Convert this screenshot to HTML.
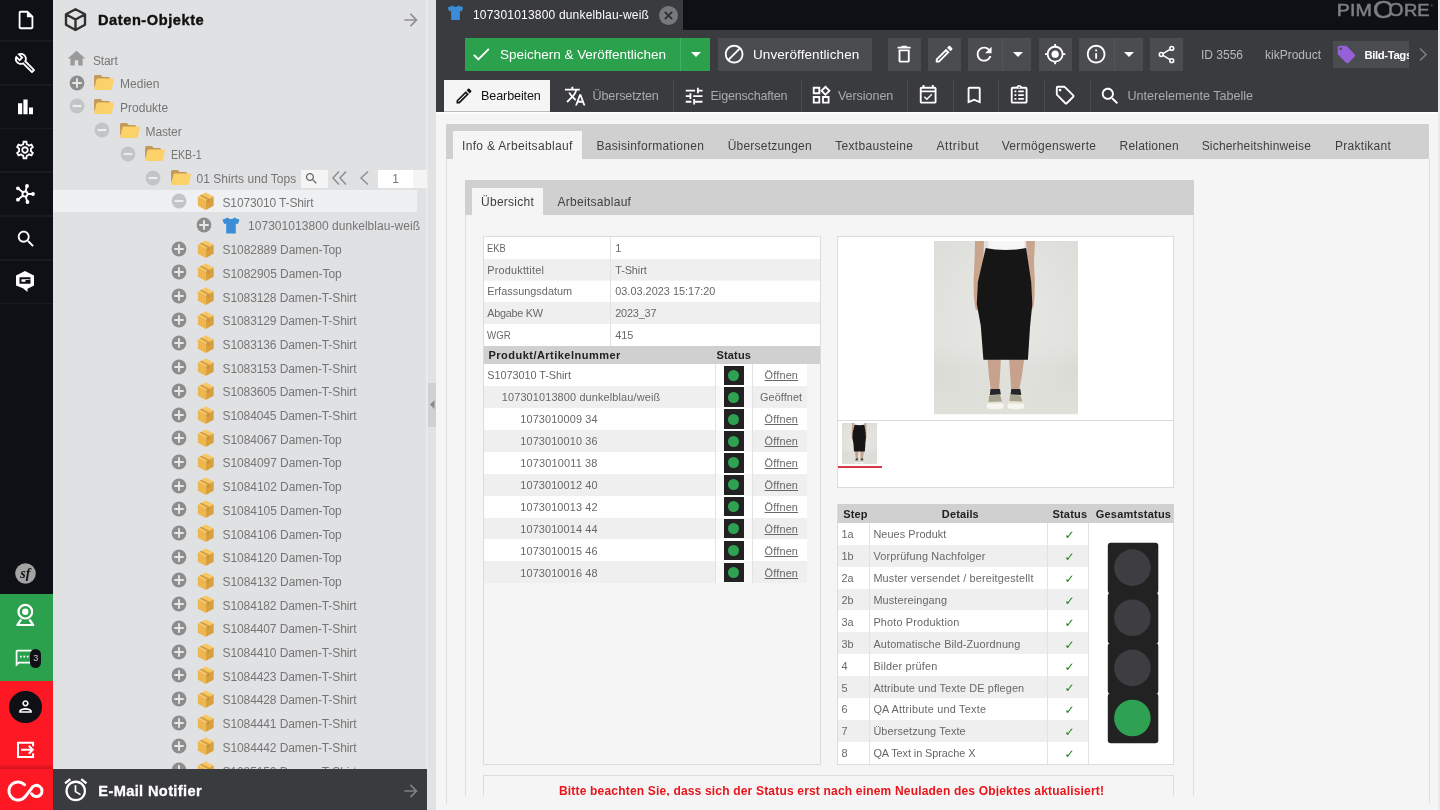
<!DOCTYPE html>
<html lang="de"><head><meta charset="utf-8"><title>Pimcore</title>
<style>
html,body{margin:0;padding:0;}
body{width:1440px;height:810px;overflow:hidden;position:relative;background:#f5f5f5;font-family:"Liberation Sans",sans-serif;}
#root{position:absolute;left:0;top:0;width:1440px;height:810px;overflow:hidden;will-change:transform;}
#root div,#root svg.ic,#root svg.ab{position:absolute;box-sizing:border-box;}
.t{white-space:nowrap;}
u{text-decoration:underline;}
</style></head><body><div id="root">

<div style="left:0.00px;top:0.00px;width:53.00px;height:594.00px;background:#0f1015;"></div>
<div style="left:0.00px;top:40.10px;width:53.00px;height:1.80px;background:#191a1f;"></div>
<div style="left:0.00px;top:83.90px;width:53.00px;height:1.80px;background:#191a1f;"></div>
<div style="left:0.00px;top:127.70px;width:53.00px;height:1.80px;background:#191a1f;"></div>
<div style="left:0.00px;top:171.40px;width:53.00px;height:1.80px;background:#191a1f;"></div>
<div style="left:0.00px;top:215.20px;width:53.00px;height:1.80px;background:#191a1f;"></div>
<div style="left:0.00px;top:259.00px;width:53.00px;height:1.80px;background:#191a1f;"></div>
<div style="left:0.00px;top:302.70px;width:53.00px;height:1.80px;background:#191a1f;"></div>
<svg class="ic" style="left:14.50px;top:8.50px;width:22.00px;height:22.00px" viewBox="0 0 24 24"><path fill="#fff" d="M14 2H6c-1.1 0-1.99.9-1.99 2L4 20c0 1.1.89 2 1.99 2H18c1.1 0 2-.9 2-2V8l-6-6zM6 20V4h7v5h5v11H6z"/></svg>
<svg class="ic" style="left:14.40px;top:52.30px;width:22.00px;height:22.00px" viewBox="0 0 24 24"><path fill="#fff" d="M22.61 18.99l-9.08-9.08c.93-2.34.45-5.1-1.44-7C9.79.61 6.21.4 3.66 2.26L7.5 6.11 6.08 7.52 2.25 3.69C.39 6.23.6 9.82 2.9 12.11c1.86 1.86 4.57 2.35 6.89 1.48l9.11 9.11c.39.39 1.02.39 1.41 0l2.3-2.3c.4-.38.4-1.01 0-1.41zm-3 1.6l-9.46-9.46c-.61.45-1.29.72-2 .82-1.36.2-2.79-.21-3.83-1.25C3.37 9.76 2.93 8.5 3 7.26l3.09 3.09 4.24-4.24-3.09-3.09c1.24-.07 2.49.37 3.44 1.31 1.08 1.08 1.49 2.57 1.24 3.96-.12.71-.42 1.37-.88 1.96l9.45 9.45-.88.89z"/></svg>
<svg class="ic" style="left:14px;top:96px;width:24px;height:24px" viewBox="0 0 24 24"><path fill="#fff" d="M4 7.3h4.2v11H4zM9.400 3.500h4.200v14.800H9.400zM15 11.500h4v6.800h-4z"/></svg>
<svg class="ic" style="left:14.10px;top:139.10px;width:22.00px;height:22.00px" viewBox="0 0 24 24"><path fill="#fff" d="M19.43 12.98c.04-.32.07-.64.07-.98 0-.34-.03-.66-.07-.98l2.11-1.65c.19-.15.24-.42.12-.64l-2-3.46c-.09-.16-.26-.25-.44-.25-.06 0-.12.01-.17.03l-2.49 1c-.52-.4-1.08-.73-1.69-.98l-.38-2.65C14.46 2.18 14.25 2 14 2h-4c-.25 0-.46.18-.49.42l-.38 2.65c-.61.25-1.17.59-1.69.98l-2.49-1c-.06-.02-.12-.03-.18-.03-.17 0-.34.09-.43.25l-2 3.46c-.13.22-.07.49.12.64l2.11 1.65c-.04.32-.07.65-.07.98 0 .33.03.66.07.98l-2.11 1.65c-.19.15-.24.42-.12.64l2 3.46c.09.16.26.25.44.25.06 0 .12-.01.17-.03l2.49-1c.52.4 1.08.73 1.69.98l.38 2.65c.03.24.24.42.49.42h4c.25 0 .46-.18.49-.42l.38-2.65c.61-.25 1.17-.59 1.69-.98l2.49 1c.06.02.12.03.18.03.17 0 .34-.09.43-.25l2-3.46c.12-.22.07-.49-.12-.64l-2.11-1.65zm-1.98-1.71c.04.31.05.52.05.73 0 .21-.02.43-.05.73l-.14 1.13.89.7 1.08.84-.7 1.21-1.27-.51-1.04-.42-.9.68c-.43.32-.84.56-1.25.73l-1.06.43-.16 1.13-.2 1.35h-1.4l-.19-1.35-.16-1.13-1.06-.43c-.43-.18-.83-.41-1.23-.71l-.91-.7-1.06.43-1.27.51-.7-1.21 1.08-.84.89-.7-.14-1.13c-.03-.31-.05-.54-.05-.74s.02-.43.05-.73l.14-1.13-.89-.7-1.08-.84.7-1.21 1.27.51 1.04.42.9-.68c.43-.32.84-.56 1.25-.73l1.06-.43.16-1.13.2-1.35h1.39l.19 1.35.16 1.13 1.06.43c.43.18.83.41 1.23.71l.91.7 1.06-.43 1.27-.51.7 1.21-1.07.85-.89.7.14 1.13zM12 8c-2.21 0-4 1.79-4 4s1.79 4 4 4 4-1.79 4-4-1.79-4-4-4zm0 6c-1.1 0-2-.9-2-2s.9-2 2-2 2 .9 2 2-.9 2-2 2z"/></svg>
<svg class="ic" style="left:14.100px;top:183.300px;width:22px;height:22px" viewBox="0 0 24 24"><g stroke="#fff" stroke-width="2" fill="none"><path d="M12 12L4.500 6M12 12L14 3.500M12 12L20.500 12M12 12L4.500 18M12 12L14.500 20.500"/></g><circle cx="12" cy="12" r="3.800" fill="#fff"/><circle cx="12" cy="12" r="1.700" fill="#0f1015"/><g fill="#fff"><circle cx="4.300" cy="5.800" r="2.100"/><circle cx="14.200" cy="3.300" r="2.100"/><circle cx="20.700" cy="12" r="2.100"/><circle cx="4.300" cy="18.200" r="2.100"/><circle cx="14.700" cy="20.700" r="2.100"/></g></svg>
<svg class="ic" style="left:14.60px;top:227.60px;width:22.00px;height:22.00px" viewBox="0 0 24 24"><path fill="#fff" d="M15.5 14h-.79l-.28-.27C15.41 12.59 16 11.11 16 9.5 16 5.91 13.09 3 9.5 3S3 5.91 3 9.5 5.91 16 9.5 16c1.61 0 3.09-.59 4.23-1.57l.27.28v.79l5 4.99L20.49 19l-4.99-5zm-6 0C7.01 14 5 11.99 5 9.5S7.01 5 9.5 5 14 7.01 14 9.5 11.99 14 9.5 14z"/></svg>
<svg class="ic" style="left:14.400px;top:270px;width:22px;height:23px" viewBox="0 0 22 23"><path fill="#fff" d="M11 1L20 5.500V15.500L13.500 18.700V22L9 18.200 2 15.500V5.500z"/><path fill="none" stroke="#0f1015" stroke-width="2" d="M15.500 9.500V8.200H6.500v4.600h9V11h-4"/></svg>
<svg class="ic" style="left:14.500px;top:563px;width:21px;height:21px" viewBox="0 0 21 21"><circle cx="10.500" cy="10.500" r="10.300" fill="#a3a3a3"/><text x="10.300" y="15" text-anchor="middle" font-family="Liberation Serif,serif" font-style="italic" font-weight="700" font-size="14" fill="#0f1015">sf</text></svg>
<div style="left:0.00px;top:594.00px;width:53.00px;height:87.40px;background:#2ba14d;"></div>
<svg class="ic" style="left:14px;top:601px;width:24px;height:27px" viewBox="0 0 24 27"><circle cx="11.300" cy="10.700" r="6.800" fill="none" stroke="#fff" stroke-width="2.200"/><circle cx="11.300" cy="10.700" r="3.200" fill="#fff"/><path d="M7.200 18.500L3.400 24h15.800l-3.800-5.500" fill="none" stroke="#fff" stroke-width="2.200" stroke-linejoin="round"/></svg>
<svg class="ic" style="left:13.95px;top:648.35px;width:20.50px;height:20.50px" viewBox="0 0 24 24"><path fill="#fff" d="M20 2H4c-1.100 0-2 .9-2 2v18l4-4h14c1.100 0 2-.9 2-2V4c0-1.100-.9-2-2-2zm0 14H5.170L4 17.170V4h16v12zM7 9h2v2H7zm4 0h2v2h-2zm4 0h2v2h-2z"/></svg>
<div style="left:30.300px;top:649.200px;width:11px;height:18.400px;border-radius:5.500px;background:#0f1015;"></div>
<div class="t" style="left:30.30px;top:648.40px;height:20.00px;line-height:20.00px;font-size:9.00px;color:#ccc;width:11.00px;text-align:center;">3</div>
<div style="left:0.00px;top:681.40px;width:53.00px;height:128.60px;background:#fd1824;"></div>
<div style="left:0.00px;top:763.50px;width:53.00px;height:5.00px;background:linear-gradient(to bottom,rgba(90,0,10,0),rgba(90,0,10,0.280));"></div>
<div style="left:9px;top:690.700px;width:32.600px;height:32.600px;border-radius:50%;background:#0f1015;"></div>
<svg class="ic" style="left:15.80px;top:697.00px;width:19.00px;height:19.00px" viewBox="0 0 24 24"><path fill="#fff" d="M12 6c1.100 0 2 .9 2 2s-.9 2-2 2-2-.9-2-2 .9-2 2-2m0 10c2.700 0 5.800 1.290 6 2H6c.23-.72 3.310-2 6-2m0-12C9.790 4 8 5.790 8 8s1.790 4 4 4 4-1.790 4-4-1.790-4-4-4zm0 10c-2.670 0-8 1.340-8 4v2h16v-2c0-2.660-5.330-4-8-4z"/></svg>
<svg class="ic" style="left:15px;top:739px;width:22px;height:22px" viewBox="0 0 22 22"><g fill="none" stroke="#fff" stroke-width="2"><path d="M18.100 7.300V3.700H3v14.200h15.100v-3.600"/><path d="M6 10.800h11.500M13.800 6.800l4 4-4 4"/></g></svg>
<svg class="ic" style="left:6px;top:779px;width:40px;height:24px" viewBox="0 0 40 24"><path fill="none" stroke="#fff" stroke-width="3" stroke-linecap="round" d="M18.600 5.700A9.100 9.100 0 1 0 16.500 19.900C20 18 22 13.500 25.200 9.900A5.600 5.600 0 1 1 25.600 14.900"/></svg>
<div style="left:53.00px;top:0.00px;width:374.00px;height:769.00px;background:#e0e1e3;"></div>
<div style="left:427.00px;top:0.00px;width:9.00px;height:810.00px;background:#e1e2e4;"></div>
<div style="left:426.00px;top:0.00px;width:2.10px;height:769.00px;background:#e9eaec;"></div>
<div style="left:427.50px;top:383.00px;width:8.50px;height:44.00px;background:#cfd0d1;"></div>
<svg class="ic" style="left:428px;top:399px;width:7px;height:12px" viewBox="0 0 7 12"><path d="M6.500 1.200v8.700L1.900 5.600z" fill="#8a8a8a"/></svg>
<svg class="ic" style="left:63px;top:6px;width:25px;height:27px" viewBox="0 0 25 27"><path d="M12.500 3.300L22 8.300v10.500l-9.500 5.200L3 18.800V8.300zM3.300 8.500l9.200 5 9.200-5M12.500 13.500V23.700" fill="none" stroke="#303030" stroke-width="2.400" stroke-linejoin="round"/></svg>
<div class="t" style="left:98.00px;top:10.00px;height:20.00px;line-height:20.00px;font-size:14.60px;color:#111;font-weight:700;letter-spacing:0.565px;-webkit-text-stroke:0.4px #111;">Daten-Objekte</div>
<svg class="ic" style="left:401.00px;top:9.50px;width:20.00px;height:20.00px" viewBox="0 0 24 24"><path fill="#909090" d="M12 4l-1.41 1.41L16.17 11H4v2h12.17l-5.58 5.59L12 20l8-8z"/></svg>
<div style="left:53.00px;top:190.40px;width:363.50px;height:21.80px;background:#eff0f2;"></div>
<svg class="ic" style="left:66.00px;top:48.40px;width:21.00px;height:21.00px" viewBox="0 0 24 24"><path fill="#9a9a9a" d="M10 20v-6h4v6h5v-8h3L12 3 2 12h3v8z"/></svg>
<div class="t" style="left:93.00px;top:50.50px;height:20.00px;line-height:20.00px;font-size:12.00px;color:#757575;letter-spacing:-0.143px;">Start</div>
<svg class="ic" style="left:68.50px;top:74.70px;width:16px;height:16px" viewBox="0 0 16 16"><circle cx="8" cy="8" r="7.400" fill="#8d8d8d"/><path d="M3.300 7.050h3.750V3.300h1.900v3.750h3.750v1.900H8.950v3.750h-1.900V8.950H3.300z" fill="#e6e7e8"/></svg>
<svg class="ic" style="left:93.30px;top:74.10px;width:21.300px;height:17px" viewBox="0 0 20 17" preserveAspectRatio="none"><path d="M1 2.600C1 1.700 1.600 1 2.500 1h4.300c.5 0 .9.200 1.200.6l1 1.400h5.500c.8 0 1.500.7 1.500 1.500V13H1z" fill="#c49a5a"/><path d="M3.300 5.600c.2-.7.800-1.100 1.500-1.100h13.400c.9 0 1.500.8 1.300 1.700l-1.700 8.600c-.1.700-.7 1.200-1.500 1.200H2.600c-1 0-1.700-.9-1.400-1.800z" fill="#fbd26a"/></svg>
<div class="t" style="left:120.00px;top:74.20px;height:20.00px;line-height:20.00px;font-size:12.00px;color:#757575;letter-spacing:0.026px;">Medien</div>
<svg class="ic" style="left:68.50px;top:98.40px;width:16px;height:16px" viewBox="0 0 16 16"><circle cx="8" cy="8" r="7.400" fill="#c3c4c5"/><path d="M3.600 6.950h8.800v2.100H3.600z" fill="#eceded"/></svg>
<svg class="ic" style="left:93.30px;top:97.80px;width:21.300px;height:17px" viewBox="0 0 20 17" preserveAspectRatio="none"><path d="M1 2.600C1 1.700 1.600 1 2.500 1h4.300c.5 0 .9.200 1.200.6l1 1.400h5.500c.8 0 1.500.7 1.500 1.500V13H1z" fill="#c49a5a"/><path d="M3.300 5.600c.2-.7.800-1.100 1.500-1.100h13.400c.9 0 1.500.8 1.300 1.700l-1.700 8.600c-.1.700-.7 1.200-1.500 1.200H2.600c-1 0-1.700-.9-1.400-1.800z" fill="#fbd26a"/></svg>
<div class="t" style="left:120.00px;top:97.90px;height:20.00px;line-height:20.00px;font-size:12.00px;color:#757575;letter-spacing:0.009px;">Produkte</div>
<svg class="ic" style="left:94.00px;top:122.10px;width:16px;height:16px" viewBox="0 0 16 16"><circle cx="8" cy="8" r="7.400" fill="#c3c4c5"/><path d="M3.600 6.950h8.800v2.100H3.600z" fill="#eceded"/></svg>
<svg class="ic" style="left:118.80px;top:121.50px;width:21.300px;height:17px" viewBox="0 0 20 17" preserveAspectRatio="none"><path d="M1 2.600C1 1.700 1.600 1 2.500 1h4.300c.5 0 .9.200 1.200.6l1 1.400h5.500c.8 0 1.500.7 1.500 1.500V13H1z" fill="#c49a5a"/><path d="M3.300 5.600c.2-.7.800-1.100 1.500-1.100h13.400c.9 0 1.500.8 1.300 1.700l-1.700 8.600c-.1.700-.7 1.200-1.500 1.200H2.600c-1 0-1.700-.9-1.400-1.800z" fill="#fbd26a"/></svg>
<div class="t" style="left:145.50px;top:121.60px;height:20.00px;line-height:20.00px;font-size:12.00px;color:#757575;letter-spacing:-0.107px;">Master</div>
<svg class="ic" style="left:119.50px;top:145.80px;width:16px;height:16px" viewBox="0 0 16 16"><circle cx="8" cy="8" r="7.400" fill="#c3c4c5"/><path d="M3.600 6.950h8.800v2.100H3.600z" fill="#eceded"/></svg>
<svg class="ic" style="left:144.30px;top:145.20px;width:21.300px;height:17px" viewBox="0 0 20 17" preserveAspectRatio="none"><path d="M1 2.600C1 1.700 1.600 1 2.500 1h4.300c.5 0 .9.200 1.200.6l1 1.400h5.500c.8 0 1.500.7 1.500 1.500V13H1z" fill="#c49a5a"/><path d="M3.300 5.600c.2-.7.800-1.100 1.500-1.100h13.400c.9 0 1.500.8 1.300 1.700l-1.700 8.600c-.1.700-.7 1.200-1.500 1.200H2.600c-1 0-1.700-.9-1.400-1.800z" fill="#fbd26a"/></svg>
<div class="t" style="left:171.00px;top:145.30px;height:20.00px;line-height:20.00px;font-size:12.00px;color:#757575;transform:scaleX(0.882);transform-origin:0 50%;">EKB-1</div>
<svg class="ic" style="left:145.00px;top:169.50px;width:16px;height:16px" viewBox="0 0 16 16"><circle cx="8" cy="8" r="7.400" fill="#c3c4c5"/><path d="M3.600 6.950h8.800v2.100H3.600z" fill="#eceded"/></svg>
<svg class="ic" style="left:169.80px;top:168.90px;width:21.300px;height:17px" viewBox="0 0 20 17" preserveAspectRatio="none"><path d="M1 2.600C1 1.700 1.600 1 2.500 1h4.300c.5 0 .9.200 1.200.6l1 1.400h5.500c.8 0 1.500.7 1.500 1.500V13H1z" fill="#c49a5a"/><path d="M3.300 5.600c.2-.7.800-1.100 1.500-1.100h13.400c.9 0 1.500.8 1.300 1.700l-1.700 8.600c-.1.700-.7 1.200-1.500 1.200H2.600c-1 0-1.700-.9-1.400-1.800z" fill="#fbd26a"/></svg>
<div class="t" style="left:196.50px;top:169.00px;height:20.00px;line-height:20.00px;font-size:12.00px;color:#757575;letter-spacing:0.029px;">01 Shirts und Tops</div>
<svg class="ic" style="left:170.50px;top:193.20px;width:16px;height:16px" viewBox="0 0 16 16"><circle cx="8" cy="8" r="7.400" fill="#c3c4c5"/><path d="M3.600 6.950h8.800v2.100H3.600z" fill="#eceded"/></svg>
<svg class="ic" style="left:197.30px;top:192.30px;width:17.500px;height:18.500px" viewBox="0 0 17 18"><path d="M8.500 0.600L16.200 4.300 8.500 8.300 0.800 4.300z" fill="#f6c765"/><path d="M0.800 4.300L8.500 8.300V17.400L0.800 13.300z" fill="#eeb64f"/><path d="M16.200 4.300L8.500 8.300V17.400L16.200 13.300z" fill="#d9a03f"/><path d="M4.300 2.600L12 6.500v3.200l-2 1V7.500L2.700 3.400z" fill="#c48c35" opacity=".75"/></svg>
<div class="t" style="left:222.50px;top:192.70px;height:20.00px;line-height:20.00px;font-size:12.00px;color:#757575;letter-spacing:-0.141px;">S1073010 T-Shirt</div>
<svg class="ic" style="left:196.00px;top:216.90px;width:16px;height:16px" viewBox="0 0 16 16"><circle cx="8" cy="8" r="7.400" fill="#8d8d8d"/><path d="M3.300 7.050h3.750V3.300h1.900v3.750h3.750v1.900H8.950v3.750h-1.900V8.950H3.300z" fill="#e6e7e8"/></svg>
<svg class="ic" style="left:221.80px;top:216.80px;width:18px;height:17px" viewBox="0 0 18 17"><path d="M5.800 0.500c.8 1.100 1.900 1.600 3.200 1.600s2.400-.5 3.200-1.600l5.300 2.300-1.600 4.300-2.100-.7V16.500H4.200V6.400l-2.100.7L.5 2.800z" fill="#3a8dd6"/></svg>
<div class="t" style="left:248.00px;top:216.40px;height:20.00px;line-height:20.00px;font-size:12.00px;color:#757575;letter-spacing:0.043px;">107301013800 dunkelblau-weiß</div>
<svg class="ic" style="left:170.50px;top:240.60px;width:16px;height:16px" viewBox="0 0 16 16"><circle cx="8" cy="8" r="7.400" fill="#8d8d8d"/><path d="M3.300 7.050h3.750V3.300h1.900v3.750h3.750v1.900H8.950v3.750h-1.900V8.950H3.300z" fill="#e6e7e8"/></svg>
<svg class="ic" style="left:197.30px;top:239.70px;width:17.500px;height:18.500px" viewBox="0 0 17 18"><path d="M8.500 0.600L16.200 4.300 8.500 8.300 0.800 4.300z" fill="#f6c765"/><path d="M0.800 4.300L8.500 8.300V17.400L0.800 13.300z" fill="#eeb64f"/><path d="M16.200 4.300L8.500 8.300V17.400L16.200 13.300z" fill="#d9a03f"/><path d="M4.300 2.600L12 6.500v3.200l-2 1V7.500L2.700 3.400z" fill="#c48c35" opacity=".75"/></svg>
<div class="t" style="left:222.50px;top:240.10px;height:20.00px;line-height:20.00px;font-size:12.00px;color:#757575;letter-spacing:-0.051px;">S1082889 Damen-Top</div>
<svg class="ic" style="left:170.50px;top:264.30px;width:16px;height:16px" viewBox="0 0 16 16"><circle cx="8" cy="8" r="7.400" fill="#8d8d8d"/><path d="M3.300 7.050h3.750V3.300h1.900v3.750h3.750v1.900H8.950v3.750h-1.900V8.950H3.300z" fill="#e6e7e8"/></svg>
<svg class="ic" style="left:197.30px;top:263.40px;width:17.500px;height:18.500px" viewBox="0 0 17 18"><path d="M8.500 0.600L16.200 4.300 8.500 8.300 0.800 4.300z" fill="#f6c765"/><path d="M0.800 4.300L8.500 8.300V17.400L0.800 13.300z" fill="#eeb64f"/><path d="M16.200 4.300L8.500 8.300V17.400L16.200 13.300z" fill="#d9a03f"/><path d="M4.300 2.600L12 6.500v3.200l-2 1V7.500L2.700 3.400z" fill="#c48c35" opacity=".75"/></svg>
<div class="t" style="left:222.50px;top:263.80px;height:20.00px;line-height:20.00px;font-size:12.00px;color:#757575;letter-spacing:-0.051px;">S1082905 Damen-Top</div>
<svg class="ic" style="left:170.50px;top:288.00px;width:16px;height:16px" viewBox="0 0 16 16"><circle cx="8" cy="8" r="7.400" fill="#8d8d8d"/><path d="M3.300 7.050h3.750V3.300h1.900v3.750h3.750v1.900H8.950v3.750h-1.900V8.950H3.300z" fill="#e6e7e8"/></svg>
<svg class="ic" style="left:197.30px;top:287.10px;width:17.500px;height:18.500px" viewBox="0 0 17 18"><path d="M8.500 0.600L16.200 4.300 8.500 8.300 0.800 4.300z" fill="#f6c765"/><path d="M0.800 4.300L8.500 8.300V17.400L0.800 13.300z" fill="#eeb64f"/><path d="M16.200 4.300L8.500 8.300V17.400L16.200 13.300z" fill="#d9a03f"/><path d="M4.300 2.600L12 6.500v3.200l-2 1V7.500L2.700 3.400z" fill="#c48c35" opacity=".75"/></svg>
<div class="t" style="left:222.50px;top:287.50px;height:20.00px;line-height:20.00px;font-size:12.00px;color:#757575;letter-spacing:-0.097px;">S1083128 Damen-T-Shirt</div>
<svg class="ic" style="left:170.50px;top:311.70px;width:16px;height:16px" viewBox="0 0 16 16"><circle cx="8" cy="8" r="7.400" fill="#8d8d8d"/><path d="M3.300 7.050h3.750V3.300h1.900v3.750h3.750v1.900H8.950v3.750h-1.900V8.950H3.300z" fill="#e6e7e8"/></svg>
<svg class="ic" style="left:197.30px;top:310.80px;width:17.500px;height:18.500px" viewBox="0 0 17 18"><path d="M8.500 0.600L16.200 4.300 8.500 8.300 0.800 4.300z" fill="#f6c765"/><path d="M0.800 4.300L8.500 8.300V17.400L0.800 13.300z" fill="#eeb64f"/><path d="M16.200 4.300L8.500 8.300V17.400L16.200 13.300z" fill="#d9a03f"/><path d="M4.300 2.600L12 6.500v3.200l-2 1V7.500L2.700 3.400z" fill="#c48c35" opacity=".75"/></svg>
<div class="t" style="left:222.50px;top:311.20px;height:20.00px;line-height:20.00px;font-size:12.00px;color:#757575;letter-spacing:-0.097px;">S1083129 Damen-T-Shirt</div>
<svg class="ic" style="left:170.50px;top:335.40px;width:16px;height:16px" viewBox="0 0 16 16"><circle cx="8" cy="8" r="7.400" fill="#8d8d8d"/><path d="M3.300 7.050h3.750V3.300h1.900v3.750h3.750v1.900H8.950v3.750h-1.900V8.950H3.300z" fill="#e6e7e8"/></svg>
<svg class="ic" style="left:197.30px;top:334.50px;width:17.500px;height:18.500px" viewBox="0 0 17 18"><path d="M8.500 0.600L16.200 4.300 8.500 8.300 0.800 4.300z" fill="#f6c765"/><path d="M0.800 4.300L8.500 8.300V17.400L0.800 13.300z" fill="#eeb64f"/><path d="M16.200 4.300L8.500 8.300V17.400L16.200 13.300z" fill="#d9a03f"/><path d="M4.300 2.600L12 6.500v3.200l-2 1V7.500L2.700 3.400z" fill="#c48c35" opacity=".75"/></svg>
<div class="t" style="left:222.50px;top:334.90px;height:20.00px;line-height:20.00px;font-size:12.00px;color:#757575;letter-spacing:-0.097px;">S1083136 Damen-T-Shirt</div>
<svg class="ic" style="left:170.50px;top:359.10px;width:16px;height:16px" viewBox="0 0 16 16"><circle cx="8" cy="8" r="7.400" fill="#8d8d8d"/><path d="M3.300 7.050h3.750V3.300h1.900v3.750h3.750v1.900H8.950v3.750h-1.900V8.950H3.300z" fill="#e6e7e8"/></svg>
<svg class="ic" style="left:197.30px;top:358.20px;width:17.500px;height:18.500px" viewBox="0 0 17 18"><path d="M8.500 0.600L16.200 4.300 8.500 8.300 0.800 4.300z" fill="#f6c765"/><path d="M0.800 4.300L8.500 8.300V17.400L0.800 13.300z" fill="#eeb64f"/><path d="M16.200 4.300L8.500 8.300V17.400L16.200 13.300z" fill="#d9a03f"/><path d="M4.300 2.600L12 6.500v3.200l-2 1V7.500L2.700 3.400z" fill="#c48c35" opacity=".75"/></svg>
<div class="t" style="left:222.50px;top:358.60px;height:20.00px;line-height:20.00px;font-size:12.00px;color:#757575;letter-spacing:-0.097px;">S1083153 Damen-T-Shirt</div>
<svg class="ic" style="left:170.50px;top:382.80px;width:16px;height:16px" viewBox="0 0 16 16"><circle cx="8" cy="8" r="7.400" fill="#8d8d8d"/><path d="M3.300 7.050h3.750V3.300h1.900v3.750h3.750v1.900H8.950v3.750h-1.900V8.950H3.300z" fill="#e6e7e8"/></svg>
<svg class="ic" style="left:197.30px;top:381.90px;width:17.500px;height:18.500px" viewBox="0 0 17 18"><path d="M8.500 0.600L16.200 4.300 8.500 8.300 0.800 4.300z" fill="#f6c765"/><path d="M0.800 4.300L8.500 8.300V17.400L0.800 13.300z" fill="#eeb64f"/><path d="M16.200 4.300L8.500 8.300V17.400L16.200 13.300z" fill="#d9a03f"/><path d="M4.300 2.600L12 6.500v3.200l-2 1V7.500L2.700 3.400z" fill="#c48c35" opacity=".75"/></svg>
<div class="t" style="left:222.50px;top:382.30px;height:20.00px;line-height:20.00px;font-size:12.00px;color:#757575;letter-spacing:-0.097px;">S1083605 Damen-T-Shirt</div>
<svg class="ic" style="left:170.50px;top:406.50px;width:16px;height:16px" viewBox="0 0 16 16"><circle cx="8" cy="8" r="7.400" fill="#8d8d8d"/><path d="M3.300 7.050h3.750V3.300h1.900v3.750h3.750v1.900H8.950v3.750h-1.900V8.950H3.300z" fill="#e6e7e8"/></svg>
<svg class="ic" style="left:197.30px;top:405.60px;width:17.500px;height:18.500px" viewBox="0 0 17 18"><path d="M8.500 0.600L16.200 4.300 8.500 8.300 0.800 4.300z" fill="#f6c765"/><path d="M0.800 4.300L8.500 8.300V17.400L0.800 13.300z" fill="#eeb64f"/><path d="M16.200 4.300L8.500 8.300V17.400L16.200 13.300z" fill="#d9a03f"/><path d="M4.300 2.600L12 6.500v3.200l-2 1V7.500L2.700 3.400z" fill="#c48c35" opacity=".75"/></svg>
<div class="t" style="left:222.50px;top:406.00px;height:20.00px;line-height:20.00px;font-size:12.00px;color:#757575;letter-spacing:-0.097px;">S1084045 Damen-T-Shirt</div>
<svg class="ic" style="left:170.50px;top:430.20px;width:16px;height:16px" viewBox="0 0 16 16"><circle cx="8" cy="8" r="7.400" fill="#8d8d8d"/><path d="M3.300 7.050h3.750V3.300h1.900v3.750h3.750v1.900H8.950v3.750h-1.900V8.950H3.300z" fill="#e6e7e8"/></svg>
<svg class="ic" style="left:197.30px;top:429.30px;width:17.500px;height:18.500px" viewBox="0 0 17 18"><path d="M8.500 0.600L16.200 4.300 8.500 8.300 0.800 4.300z" fill="#f6c765"/><path d="M0.800 4.300L8.500 8.300V17.400L0.800 13.300z" fill="#eeb64f"/><path d="M16.200 4.300L8.500 8.300V17.400L16.200 13.300z" fill="#d9a03f"/><path d="M4.300 2.600L12 6.500v3.200l-2 1V7.500L2.700 3.400z" fill="#c48c35" opacity=".75"/></svg>
<div class="t" style="left:222.50px;top:429.70px;height:20.00px;line-height:20.00px;font-size:12.00px;color:#757575;letter-spacing:-0.051px;">S1084067 Damen-Top</div>
<svg class="ic" style="left:170.50px;top:453.90px;width:16px;height:16px" viewBox="0 0 16 16"><circle cx="8" cy="8" r="7.400" fill="#8d8d8d"/><path d="M3.300 7.050h3.750V3.300h1.900v3.750h3.750v1.900H8.950v3.750h-1.900V8.950H3.300z" fill="#e6e7e8"/></svg>
<svg class="ic" style="left:197.30px;top:453.00px;width:17.500px;height:18.500px" viewBox="0 0 17 18"><path d="M8.500 0.600L16.200 4.300 8.500 8.300 0.800 4.300z" fill="#f6c765"/><path d="M0.800 4.300L8.500 8.300V17.400L0.800 13.300z" fill="#eeb64f"/><path d="M16.200 4.300L8.500 8.300V17.400L16.200 13.300z" fill="#d9a03f"/><path d="M4.300 2.600L12 6.500v3.200l-2 1V7.500L2.700 3.400z" fill="#c48c35" opacity=".75"/></svg>
<div class="t" style="left:222.50px;top:453.40px;height:20.00px;line-height:20.00px;font-size:12.00px;color:#757575;letter-spacing:-0.051px;">S1084097 Damen-Top</div>
<svg class="ic" style="left:170.50px;top:477.60px;width:16px;height:16px" viewBox="0 0 16 16"><circle cx="8" cy="8" r="7.400" fill="#8d8d8d"/><path d="M3.300 7.050h3.750V3.300h1.900v3.750h3.750v1.900H8.950v3.750h-1.900V8.950H3.300z" fill="#e6e7e8"/></svg>
<svg class="ic" style="left:197.30px;top:476.70px;width:17.500px;height:18.500px" viewBox="0 0 17 18"><path d="M8.500 0.600L16.200 4.300 8.500 8.300 0.800 4.300z" fill="#f6c765"/><path d="M0.800 4.300L8.500 8.300V17.400L0.800 13.300z" fill="#eeb64f"/><path d="M16.200 4.300L8.500 8.300V17.400L16.200 13.300z" fill="#d9a03f"/><path d="M4.300 2.600L12 6.500v3.200l-2 1V7.500L2.700 3.400z" fill="#c48c35" opacity=".75"/></svg>
<div class="t" style="left:222.50px;top:477.10px;height:20.00px;line-height:20.00px;font-size:12.00px;color:#757575;letter-spacing:-0.051px;">S1084102 Damen-Top</div>
<svg class="ic" style="left:170.50px;top:501.30px;width:16px;height:16px" viewBox="0 0 16 16"><circle cx="8" cy="8" r="7.400" fill="#8d8d8d"/><path d="M3.300 7.050h3.750V3.300h1.900v3.750h3.750v1.900H8.950v3.750h-1.900V8.950H3.300z" fill="#e6e7e8"/></svg>
<svg class="ic" style="left:197.30px;top:500.40px;width:17.500px;height:18.500px" viewBox="0 0 17 18"><path d="M8.500 0.600L16.200 4.300 8.500 8.300 0.800 4.300z" fill="#f6c765"/><path d="M0.800 4.300L8.500 8.300V17.400L0.800 13.300z" fill="#eeb64f"/><path d="M16.200 4.300L8.500 8.300V17.400L16.200 13.300z" fill="#d9a03f"/><path d="M4.300 2.600L12 6.500v3.200l-2 1V7.500L2.700 3.400z" fill="#c48c35" opacity=".75"/></svg>
<div class="t" style="left:222.50px;top:500.80px;height:20.00px;line-height:20.00px;font-size:12.00px;color:#757575;letter-spacing:-0.051px;">S1084105 Damen-Top</div>
<svg class="ic" style="left:170.50px;top:525.00px;width:16px;height:16px" viewBox="0 0 16 16"><circle cx="8" cy="8" r="7.400" fill="#8d8d8d"/><path d="M3.300 7.050h3.750V3.300h1.900v3.750h3.750v1.900H8.950v3.750h-1.900V8.950H3.300z" fill="#e6e7e8"/></svg>
<svg class="ic" style="left:197.30px;top:524.10px;width:17.500px;height:18.500px" viewBox="0 0 17 18"><path d="M8.500 0.600L16.200 4.300 8.500 8.300 0.800 4.300z" fill="#f6c765"/><path d="M0.800 4.300L8.500 8.300V17.400L0.800 13.300z" fill="#eeb64f"/><path d="M16.200 4.300L8.500 8.300V17.400L16.200 13.300z" fill="#d9a03f"/><path d="M4.300 2.600L12 6.500v3.200l-2 1V7.500L2.700 3.400z" fill="#c48c35" opacity=".75"/></svg>
<div class="t" style="left:222.50px;top:524.50px;height:20.00px;line-height:20.00px;font-size:12.00px;color:#757575;letter-spacing:-0.051px;">S1084106 Damen-Top</div>
<svg class="ic" style="left:170.50px;top:548.70px;width:16px;height:16px" viewBox="0 0 16 16"><circle cx="8" cy="8" r="7.400" fill="#8d8d8d"/><path d="M3.300 7.050h3.750V3.300h1.900v3.750h3.750v1.900H8.950v3.750h-1.900V8.950H3.300z" fill="#e6e7e8"/></svg>
<svg class="ic" style="left:197.30px;top:547.80px;width:17.500px;height:18.500px" viewBox="0 0 17 18"><path d="M8.500 0.600L16.200 4.300 8.500 8.300 0.800 4.300z" fill="#f6c765"/><path d="M0.800 4.300L8.500 8.300V17.400L0.800 13.300z" fill="#eeb64f"/><path d="M16.200 4.300L8.500 8.300V17.400L16.200 13.300z" fill="#d9a03f"/><path d="M4.300 2.600L12 6.500v3.200l-2 1V7.500L2.700 3.400z" fill="#c48c35" opacity=".75"/></svg>
<div class="t" style="left:222.50px;top:548.20px;height:20.00px;line-height:20.00px;font-size:12.00px;color:#757575;letter-spacing:-0.051px;">S1084120 Damen-Top</div>
<svg class="ic" style="left:170.50px;top:572.40px;width:16px;height:16px" viewBox="0 0 16 16"><circle cx="8" cy="8" r="7.400" fill="#8d8d8d"/><path d="M3.300 7.050h3.750V3.300h1.900v3.750h3.750v1.900H8.950v3.750h-1.900V8.950H3.300z" fill="#e6e7e8"/></svg>
<svg class="ic" style="left:197.30px;top:571.50px;width:17.500px;height:18.500px" viewBox="0 0 17 18"><path d="M8.500 0.600L16.200 4.300 8.500 8.300 0.800 4.300z" fill="#f6c765"/><path d="M0.800 4.300L8.500 8.300V17.400L0.800 13.300z" fill="#eeb64f"/><path d="M16.200 4.300L8.500 8.300V17.400L16.200 13.300z" fill="#d9a03f"/><path d="M4.300 2.600L12 6.500v3.200l-2 1V7.500L2.700 3.400z" fill="#c48c35" opacity=".75"/></svg>
<div class="t" style="left:222.50px;top:571.90px;height:20.00px;line-height:20.00px;font-size:12.00px;color:#757575;letter-spacing:-0.051px;">S1084132 Damen-Top</div>
<svg class="ic" style="left:170.50px;top:596.10px;width:16px;height:16px" viewBox="0 0 16 16"><circle cx="8" cy="8" r="7.400" fill="#8d8d8d"/><path d="M3.300 7.050h3.750V3.300h1.900v3.750h3.750v1.900H8.950v3.750h-1.900V8.950H3.300z" fill="#e6e7e8"/></svg>
<svg class="ic" style="left:197.30px;top:595.20px;width:17.500px;height:18.500px" viewBox="0 0 17 18"><path d="M8.500 0.600L16.200 4.300 8.500 8.300 0.800 4.300z" fill="#f6c765"/><path d="M0.800 4.300L8.500 8.300V17.400L0.800 13.300z" fill="#eeb64f"/><path d="M16.200 4.300L8.500 8.300V17.400L16.200 13.300z" fill="#d9a03f"/><path d="M4.300 2.600L12 6.500v3.200l-2 1V7.500L2.700 3.400z" fill="#c48c35" opacity=".75"/></svg>
<div class="t" style="left:222.50px;top:595.60px;height:20.00px;line-height:20.00px;font-size:12.00px;color:#757575;letter-spacing:-0.097px;">S1084182 Damen-T-Shirt</div>
<svg class="ic" style="left:170.50px;top:619.80px;width:16px;height:16px" viewBox="0 0 16 16"><circle cx="8" cy="8" r="7.400" fill="#8d8d8d"/><path d="M3.300 7.050h3.750V3.300h1.900v3.750h3.750v1.900H8.950v3.750h-1.900V8.950H3.300z" fill="#e6e7e8"/></svg>
<svg class="ic" style="left:197.30px;top:618.90px;width:17.500px;height:18.500px" viewBox="0 0 17 18"><path d="M8.500 0.600L16.200 4.300 8.500 8.300 0.800 4.300z" fill="#f6c765"/><path d="M0.800 4.300L8.500 8.300V17.400L0.800 13.300z" fill="#eeb64f"/><path d="M16.200 4.300L8.500 8.300V17.400L16.200 13.300z" fill="#d9a03f"/><path d="M4.300 2.600L12 6.500v3.200l-2 1V7.500L2.700 3.400z" fill="#c48c35" opacity=".75"/></svg>
<div class="t" style="left:222.50px;top:619.30px;height:20.00px;line-height:20.00px;font-size:12.00px;color:#757575;letter-spacing:-0.097px;">S1084407 Damen-T-Shirt</div>
<svg class="ic" style="left:170.50px;top:643.50px;width:16px;height:16px" viewBox="0 0 16 16"><circle cx="8" cy="8" r="7.400" fill="#8d8d8d"/><path d="M3.300 7.050h3.750V3.300h1.900v3.750h3.750v1.900H8.950v3.750h-1.900V8.950H3.300z" fill="#e6e7e8"/></svg>
<svg class="ic" style="left:197.30px;top:642.60px;width:17.500px;height:18.500px" viewBox="0 0 17 18"><path d="M8.500 0.600L16.200 4.300 8.500 8.300 0.800 4.300z" fill="#f6c765"/><path d="M0.800 4.300L8.500 8.300V17.400L0.800 13.300z" fill="#eeb64f"/><path d="M16.200 4.300L8.500 8.300V17.400L16.200 13.300z" fill="#d9a03f"/><path d="M4.300 2.600L12 6.500v3.200l-2 1V7.500L2.700 3.400z" fill="#c48c35" opacity=".75"/></svg>
<div class="t" style="left:222.50px;top:643.00px;height:20.00px;line-height:20.00px;font-size:12.00px;color:#757575;letter-spacing:-0.097px;">S1084410 Damen-T-Shirt</div>
<svg class="ic" style="left:170.50px;top:667.20px;width:16px;height:16px" viewBox="0 0 16 16"><circle cx="8" cy="8" r="7.400" fill="#8d8d8d"/><path d="M3.300 7.050h3.750V3.300h1.900v3.750h3.750v1.900H8.950v3.750h-1.900V8.950H3.300z" fill="#e6e7e8"/></svg>
<svg class="ic" style="left:197.30px;top:666.30px;width:17.500px;height:18.500px" viewBox="0 0 17 18"><path d="M8.500 0.600L16.200 4.300 8.500 8.300 0.800 4.300z" fill="#f6c765"/><path d="M0.800 4.300L8.500 8.300V17.400L0.800 13.300z" fill="#eeb64f"/><path d="M16.200 4.300L8.500 8.300V17.400L16.200 13.300z" fill="#d9a03f"/><path d="M4.300 2.600L12 6.500v3.200l-2 1V7.500L2.700 3.400z" fill="#c48c35" opacity=".75"/></svg>
<div class="t" style="left:222.50px;top:666.70px;height:20.00px;line-height:20.00px;font-size:12.00px;color:#757575;letter-spacing:-0.097px;">S1084423 Damen-T-Shirt</div>
<svg class="ic" style="left:170.50px;top:690.90px;width:16px;height:16px" viewBox="0 0 16 16"><circle cx="8" cy="8" r="7.400" fill="#8d8d8d"/><path d="M3.300 7.050h3.750V3.300h1.900v3.750h3.750v1.900H8.950v3.750h-1.900V8.950H3.300z" fill="#e6e7e8"/></svg>
<svg class="ic" style="left:197.30px;top:690.00px;width:17.500px;height:18.500px" viewBox="0 0 17 18"><path d="M8.500 0.600L16.200 4.300 8.500 8.300 0.800 4.300z" fill="#f6c765"/><path d="M0.800 4.300L8.500 8.300V17.400L0.800 13.300z" fill="#eeb64f"/><path d="M16.200 4.300L8.500 8.300V17.400L16.200 13.300z" fill="#d9a03f"/><path d="M4.300 2.600L12 6.500v3.200l-2 1V7.500L2.700 3.400z" fill="#c48c35" opacity=".75"/></svg>
<div class="t" style="left:222.50px;top:690.40px;height:20.00px;line-height:20.00px;font-size:12.00px;color:#757575;letter-spacing:-0.097px;">S1084428 Damen-T-Shirt</div>
<svg class="ic" style="left:170.50px;top:714.60px;width:16px;height:16px" viewBox="0 0 16 16"><circle cx="8" cy="8" r="7.400" fill="#8d8d8d"/><path d="M3.300 7.050h3.750V3.300h1.900v3.750h3.750v1.900H8.950v3.750h-1.900V8.950H3.300z" fill="#e6e7e8"/></svg>
<svg class="ic" style="left:197.30px;top:713.70px;width:17.500px;height:18.500px" viewBox="0 0 17 18"><path d="M8.500 0.600L16.200 4.300 8.500 8.300 0.800 4.300z" fill="#f6c765"/><path d="M0.800 4.300L8.500 8.300V17.400L0.800 13.300z" fill="#eeb64f"/><path d="M16.200 4.300L8.500 8.300V17.400L16.200 13.300z" fill="#d9a03f"/><path d="M4.300 2.600L12 6.500v3.200l-2 1V7.500L2.700 3.400z" fill="#c48c35" opacity=".75"/></svg>
<div class="t" style="left:222.50px;top:714.10px;height:20.00px;line-height:20.00px;font-size:12.00px;color:#757575;letter-spacing:-0.097px;">S1084441 Damen-T-Shirt</div>
<svg class="ic" style="left:170.50px;top:738.30px;width:16px;height:16px" viewBox="0 0 16 16"><circle cx="8" cy="8" r="7.400" fill="#8d8d8d"/><path d="M3.300 7.050h3.750V3.300h1.900v3.750h3.750v1.900H8.950v3.750h-1.900V8.950H3.300z" fill="#e6e7e8"/></svg>
<svg class="ic" style="left:197.30px;top:737.40px;width:17.500px;height:18.500px" viewBox="0 0 17 18"><path d="M8.500 0.600L16.200 4.300 8.500 8.300 0.800 4.300z" fill="#f6c765"/><path d="M0.800 4.300L8.500 8.300V17.400L0.800 13.300z" fill="#eeb64f"/><path d="M16.200 4.300L8.500 8.300V17.400L16.200 13.300z" fill="#d9a03f"/><path d="M4.300 2.600L12 6.500v3.200l-2 1V7.500L2.700 3.400z" fill="#c48c35" opacity=".75"/></svg>
<div class="t" style="left:222.50px;top:737.80px;height:20.00px;line-height:20.00px;font-size:12.00px;color:#757575;letter-spacing:-0.097px;">S1084442 Damen-T-Shirt</div>
<svg class="ic" style="left:170.50px;top:762.00px;width:16px;height:16px" viewBox="0 0 16 16"><circle cx="8" cy="8" r="7.400" fill="#8d8d8d"/><path d="M3.300 7.050h3.750V3.300h1.900v3.750h3.750v1.900H8.950v3.750h-1.900V8.950H3.300z" fill="#e6e7e8"/></svg>
<svg class="ic" style="left:197.30px;top:761.10px;width:17.500px;height:18.500px" viewBox="0 0 17 18"><path d="M8.500 0.600L16.200 4.300 8.500 8.300 0.800 4.300z" fill="#f6c765"/><path d="M0.800 4.300L8.500 8.300V17.400L0.800 13.300z" fill="#eeb64f"/><path d="M16.200 4.300L8.500 8.300V17.400L16.200 13.300z" fill="#d9a03f"/><path d="M4.300 2.600L12 6.500v3.200l-2 1V7.500L2.700 3.400z" fill="#c48c35" opacity=".75"/></svg>
<div class="t" style="left:222.50px;top:761.50px;height:20.00px;line-height:20.00px;font-size:12.00px;color:#757575;letter-spacing:-0.097px;">S1085150 Damen-T-Shirt</div>
<div style="left:301.00px;top:169.50px;width:126.00px;height:18.00px;background:#f4f4f5;"></div>
<div style="left:327.50px;top:168.50px;width:50.00px;height:19.50px;background:#e0e1e3;"></div>
<svg class="ic" style="left:304.00px;top:171.00px;width:15.00px;height:15.00px" viewBox="0 0 24 24"><path fill="#666" d="M15.5 14h-.79l-.28-.27C15.41 12.59 16 11.11 16 9.5 16 5.91 13.09 3 9.5 3S3 5.91 3 9.5 5.91 16 9.5 16c1.61 0 3.09-.59 4.23-1.57l.27.28v.79l5 4.99L20.49 19l-4.99-5zm-6 0C7.01 14 5 11.99 5 9.5S7.01 5 9.5 5 14 7.01 14 9.5 11.99 14 9.5 14z"/></svg>
<svg class="ic" style="left:331px;top:170px;width:17px;height:16px" viewBox="0 0 17 16"><path d="M8 1.500L2 8l6 6.500M15 1.500L9 8l6 6.500" fill="none" stroke="#8e8e8e" stroke-width="1.500"/></svg>
<svg class="ic" style="left:358px;top:170px;width:12px;height:16px" viewBox="0 0 12 16"><path d="M10 1.500L3 8l7 6.500" fill="none" stroke="#8e8e8e" stroke-width="1.500"/></svg>
<div style="left:377.50px;top:169.50px;width:35.60px;height:18.00px;background:#fff;"></div>
<div class="t" style="left:377.50px;top:168.50px;height:20.00px;line-height:20.00px;font-size:12.00px;color:#777;width:36.00px;text-align:center;">1</div>
<div style="left:53.00px;top:769.00px;width:374.00px;height:41.00px;background:#3a3b3f;"></div>
<svg class="ic" style="left:61.85px;top:775.95px;width:27.50px;height:27.50px" viewBox="0 0 24 24"><path fill="#fff" d="M22 5.72l-4.6-3.86-1.29 1.53 4.6 3.86L22 5.720zM7.880 3.390L6.600 1.860 2 5.710l1.290 1.530 4.590-3.850zM12.500 8H11v6l4.750 2.850.75-1.230-4-2.370V8zM12 4c-4.970 0-9 4.030-9 9s4.020 9 9 9c4.970 0 9-4.030 9-9s-4.030-9-9-9zm0 16c-3.870 0-7-3.130-7-7s3.130-7 7-7 7 3.130 7 7-3.130 7-7 7z"/></svg>
<div class="t" style="left:98.30px;top:780.70px;height:20.00px;line-height:20.00px;font-size:14.60px;color:#fff;font-weight:700;letter-spacing:0.372px;-webkit-text-stroke:0.3px #fff;">E-Mail Notifier</div>
<svg class="ic" style="left:401.00px;top:780.50px;width:20.00px;height:20.00px" viewBox="0 0 24 24"><path fill="#808185" d="M12 4l-1.41 1.41L16.17 11H4v2h12.17l-5.58 5.59L12 20l8-8z"/></svg>
<div style="left:436.00px;top:0.00px;width:1002.30px;height:30.00px;background:#0f1015;"></div>
<div style="left:436.00px;top:0.00px;width:247.00px;height:30.00px;background:#3a3b3f;"></div>
<svg class="ic" style="left:447.00px;top:5.00px;width:17px;height:15.500px" viewBox="0 0 18 17"><path d="M5.800 0.500c.8 1.100 1.900 1.600 3.200 1.600s2.400-.5 3.200-1.600l5.300 2.300-1.600 4.300-2.100-.7V16.500H4.200V6.400l-2.100.7L.5 2.800z" fill="#3a8dd6"/></svg>
<div class="t" style="left:473.00px;top:4.80px;height:20.00px;line-height:20.00px;font-size:12.00px;color:#fff;letter-spacing:0.189px;">107301013800 dunkelblau-weiß</div>
<div style="left:659px;top:5.500px;width:19px;height:19px;border-radius:50%;background:#77787b;"></div>
<svg class="ic" style="left:662.00px;top:8.50px;width:13.00px;height:13.00px" viewBox="0 0 24 24"><path fill="#2b2c30" d="M19 6.41L17.59 5 12 10.59 6.41 5 5 6.41 10.59 12 5 17.59 6.410 19 12 13.410 17.590 19 19 17.590 13.410 12z" stroke="#2b2c30" stroke-width="1.600"/></svg>
<svg class="ab" style="left:1336px;top:0;width:102px;height:22px" viewBox="0 0 102 22"><g font-family="Liberation Sans,sans-serif" fill="#7d7e81" stroke="#7d7e81" stroke-width="0.500" font-weight="400"><text x="0.800" y="15.700" font-size="16.300" textLength="35" lengthAdjust="spacingAndGlyphs">PIM</text><text x="36.700" y="17.700" font-size="23.300" textLength="20.200" lengthAdjust="spacingAndGlyphs">C</text><text x="52.400" y="16.300" font-size="18" textLength="15" lengthAdjust="spacingAndGlyphs">O</text><text x="68" y="15.700" font-size="16.300" textLength="25.700" lengthAdjust="spacingAndGlyphs">RE</text><text x="94.300" y="6.500" font-size="3.500" stroke="none">®</text></g></svg>
<div style="left:436.00px;top:30.00px;width:1002.30px;height:82.00px;background:#3a3b3f;"></div>
<div style="left:465.00px;top:38.00px;width:245.30px;height:33.00px;background:#2ba14d;"></div>
<div style="left:680.00px;top:38.00px;width:1.00px;height:33.00px;background:rgba(255,255,255,0.130);"></div>
<svg class="ic" style="left:470.35px;top:43.35px;width:22.30px;height:22.30px" viewBox="0 0 24 24"><path fill="#fff" d="M9 16.17L4.83 12l-1.42 1.41L9 19 21 7l-1.41-1.41z"/></svg>
<div class="t" style="left:500.00px;top:44.80px;height:20.00px;line-height:20.00px;font-size:13.50px;color:#fff;letter-spacing:-0.014px;">Speichern &amp; Veröffentlichen</div>
<svg class="ic" style="left:683.50px;top:42.00px;width:24.00px;height:24.00px" viewBox="0 0 24 24"><path fill="#fff" d="M7 10l5 5 5-5z"/></svg>
<div style="left:718.00px;top:38.00px;width:154.30px;height:33.00px;background:#4b4c50;"></div>
<svg class="ic" style="left:723.35px;top:43.35px;width:22.30px;height:22.30px" viewBox="0 0 24 24"><path fill="#fff" d="M12 2C6.48 2 2 6.48 2 12s4.48 10 10 10 10-4.48 10-10S17.52 2 12 2zM4 12c0-4.42 3.58-8 8-8 1.85 0 3.55.63 4.9 1.69L5.69 16.9C4.63 15.55 4 13.85 4 12zm8 8c-1.85 0-3.55-.63-4.9-1.69L18.31 7.1C19.37 8.45 20 10.15 20 12c0 4.42-3.58 8-8 8z"/></svg>
<div class="t" style="left:753.00px;top:44.80px;height:20.00px;line-height:20.00px;font-size:13.50px;color:#fff;letter-spacing:0.089px;">Unveröffentlichen</div>
<div style="left:887.50px;top:38.00px;width:33.00px;height:33.00px;background:#4b4c50;"></div>
<svg class="ic" style="left:892.85px;top:43.35px;width:22.30px;height:22.30px" viewBox="0 0 24 24"><path fill="#fff" d="M16 9v10H8V9h8m-1.5-6h-5l-1 1H5v2h14V4h-3.5l-1-1zM18 7H6v12c0 1.1.9 2 2 2h8c1.1 0 2-.9 2-2V7z"/></svg>
<div style="left:927.70px;top:38.00px;width:33.00px;height:33.00px;background:#4b4c50;"></div>
<svg class="ic" style="left:932.85px;top:43.35px;width:22.30px;height:22.30px" viewBox="0 0 24 24"><path fill="#fff" d="M14.06 9.02l.92.92L5.92 19H5v-.92l9.06-9.06M17.66 3c-.25 0-.51.1-.7.29l-1.83 1.83 3.75 3.75 1.83-1.83c.39-.39.39-1.02 0-1.41l-2.340-2.34c-.2-.2-.45-.29-.71-.29zm-3.6 3.19L3 17.25V21h3.75L17.81 9.94l-3.75-3.75z"/></svg>
<div style="left:967.70px;top:38.00px;width:63.60px;height:33.00px;background:#4b4c50;"></div>
<div style="left:1002.00px;top:38.00px;width:1.00px;height:33.00px;background:rgba(255,255,255,0.050);"></div>
<svg class="ic" style="left:973.35px;top:43.35px;width:22.30px;height:22.30px" viewBox="0 0 24 24"><path fill="#fff" d="M17.65 6.35C16.2 4.9 14.21 4 12 4c-4.42 0-7.99 3.58-7.99 8s3.57 8 7.99 8c3.73 0 6.84-2.55 7.73-6h-2.08c-.82 2.33-3.04 4-5.65 4-3.31 0-6-2.69-6-6s2.69-6 6-6c1.66 0 3.14.69 4.22 1.78L13 11h7V4l-2.350 2.35z"/></svg>
<svg class="ic" style="left:1005.50px;top:42.00px;width:24.00px;height:24.00px" viewBox="0 0 24 24"><path fill="#fff" d="M7 10l5 5 5-5z"/></svg>
<div style="left:1039.00px;top:38.00px;width:33.00px;height:33.00px;background:#4b4c50;"></div>
<svg class="ic" style="left:1044.35px;top:43.35px;width:22.30px;height:22.30px" viewBox="0 0 24 24"><path fill="#fff" d="M12 8c-2.21 0-4 1.79-4 4s1.79 4 4 4 4-1.79 4-4-1.79-4-4-4zm8.94 3c-.46-4.17-3.77-7.48-7.94-7.94V1h-2v2.06C6.83 3.52 3.52 6.83 3.06 11H1v2h2.060c.46 4.17 3.77 7.48 7.94 7.94V23h2v-2.060c4.17-.46 7.48-3.77 7.94-7.94H23v-2h-2.060zM12 19c-3.870 0-7-3.130-7-7s3.130-7 7-7 7 3.130 7 7-3.130 7-7 7z"/></svg>
<div style="left:1079.00px;top:38.00px;width:63.70px;height:33.00px;background:#4b4c50;"></div>
<div style="left:1113.50px;top:38.00px;width:1.00px;height:33.00px;background:rgba(255,255,255,0.050);"></div>
<svg class="ic" style="left:1084.85px;top:43.35px;width:22.30px;height:22.30px" viewBox="0 0 24 24"><path fill="#fff" d="M11 7h2v2h-2zm0 4h2v6h-2zm1-9C6.48 2 2 6.48 2 12s4.48 10 10 10 10-4.48 10-10S17.52 2 12 2zm0 18c-4.41 0-8-3.590-8-8s3.590-8 8-8 8 3.590 8 8-3.590 8-8 8z"/></svg>
<svg class="ic" style="left:1117.00px;top:42.00px;width:24.00px;height:24.00px" viewBox="0 0 24 24"><path fill="#fff" d="M7 10l5 5 5-5z"/></svg>
<div style="left:1150.00px;top:38.00px;width:33.00px;height:33.00px;background:#4b4c50;"></div>
<svg class="ic" style="left:1156px;top:44px;width:21px;height:21px" viewBox="0 0 24 24"><g fill="none" stroke="#fff" stroke-width="1.800"><circle cx="18" cy="5" r="2.200"/><circle cx="6" cy="12" r="2.200"/><circle cx="18" cy="19" r="2.200"/><path d="M8 11l8-4.800M8 13l8 4.800"/></g></svg>
<div class="t" style="left:1201.00px;top:44.80px;height:20.00px;line-height:20.00px;font-size:12.00px;color:#b9babc;letter-spacing:-0.005px;">ID 3556</div>
<div class="t" style="left:1265.00px;top:44.80px;height:20.00px;line-height:20.00px;font-size:12.00px;color:#b9babc;letter-spacing:-0.003px;">kikProduct</div>
<div style="left:1332.50px;top:41.00px;width:76.50px;height:27.00px;background:#4b4c50;overflow:hidden;"></div>
<svg class="ic" style="left:1336px;top:44px;width:21px;height:21px" viewBox="0 0 24 24"><path fill="#9560d8" d="M21.41 11.58l-9-9C12.050 2.220 11.550 2 11 2H4c-1.100 0-2 .9-2 2v7c0 .55.220 1.050.590 1.420l9 9c.36.360.86.580 1.410.580.550 0 1.050-.220 1.410-.590l7-7c.37-.36.590-.86.590-1.410 0-.55-.230-1.060-.590-1.420zM5.500 7C4.670 7 4 6.330 4 5.500S4.670 4 5.500 4 7 4.670 7 5.500 6.330 7 5.500 7z"/></svg>
<div class="t" style="left:1364.500px;top:44.500px;width:44.500px;height:20px;line-height:20px;font-size:11.300px;font-weight:700;color:#fff;overflow:hidden;letter-spacing:-0.369px;">Bild-Tags</div>
<svg class="ic" style="left:1418px;top:47px;width:10px;height:15px" viewBox="0 0 10 15"><path d="M2 1.500l6 6-6 6" fill="none" stroke="#7b7c80" stroke-width="1.700"/></svg>
<div style="left:444.00px;top:79.60px;width:106.20px;height:32.40px;background:#f5f5f5;"></div>
<div style="left:444.00px;top:111.00px;width:106.20px;height:1.50px;background:#bcbcbc;"></div>
<svg class="ic" style="left:453.50px;top:86.00px;width:20.00px;height:20.00px" viewBox="0 0 24 24"><path fill="#111" d="M14.06 9.02l.92.92L5.92 19H5v-.92l9.06-9.06M17.66 3c-.25 0-.51.1-.7.29l-1.83 1.83 3.75 3.75 1.83-1.83c.39-.39.39-1.02 0-1.41l-2.340-2.34c-.2-.2-.45-.29-.71-.29zm-3.6 3.19L3 17.25V21h3.75L17.81 9.94l-3.75-3.75z"/></svg>
<div class="t" style="left:481.00px;top:85.80px;height:20.00px;line-height:20.00px;font-size:12.60px;color:#111;letter-spacing:-0.118px;">Bearbeiten</div>
<div style="left:672.50px;top:80.00px;width:1.00px;height:31.50px;background:#4a4b4f;"></div>
<div style="left:801.00px;top:80.00px;width:1.00px;height:31.50px;background:#4a4b4f;"></div>
<div style="left:906.80px;top:80.00px;width:1.00px;height:31.50px;background:#4a4b4f;"></div>
<div style="left:952.50px;top:80.00px;width:1.00px;height:31.50px;background:#4a4b4f;"></div>
<div style="left:998.00px;top:80.00px;width:1.00px;height:31.50px;background:#4a4b4f;"></div>
<div style="left:1043.90px;top:80.00px;width:1.00px;height:31.50px;background:#4a4b4f;"></div>
<div style="left:1089.70px;top:80.00px;width:1.00px;height:31.50px;background:#4a4b4f;"></div>
<svg class="ic" style="left:564.35px;top:84.85px;width:22.30px;height:22.30px" viewBox="0 0 24 24"><path fill="#fff" d="M12.87 15.07l-2.54-2.51.03-.03c1.74-1.94 2.98-4.17 3.71-6.53H17V4h-7V2H8v2H1v1.990h11.170C11.500 7.920 10.440 9.750 9 11.350 8.070 10.320 7.300 9.190 6.690 8h-2c.73 1.630 1.730 3.170 2.980 4.560l-5.090 5.020L4 19l5-5 3.110 3.110.76-2.040zM18.500 10h-2L12 22h2l1.120-3h4.750L21 22h2l-4.500-12zm-2.620 7l1.620-4.330L19.120 17h-3.240z"/></svg>
<div class="t" style="left:592.50px;top:85.80px;height:20.00px;line-height:20.00px;font-size:12.60px;color:#a9aaad;letter-spacing:-0.158px;">Übersetzten</div>
<svg class="ic" style="left:682.85px;top:84.85px;width:22.30px;height:22.30px" viewBox="0 0 24 24"><path fill="#fff" d="M3 17v2h6v-2H3zM3 5v2h10V5H3zm10 16v-2h8v-2h-8v-2h-2v6h2zM7 9v2H3v2h4v2h2V9H7zm14 4v-2H11v2h10zm-6-4h2V7h4V5h-4V3h-2v6z"/></svg>
<div class="t" style="left:710.40px;top:85.80px;height:20.00px;line-height:20.00px;font-size:12.60px;color:#a9aaad;letter-spacing:-0.218px;">Eigenschaften</div>
<svg class="ic" style="left:810.15px;top:83.85px;width:22.30px;height:22.30px" viewBox="0 0 24 24"><path fill="#fff" d="M16.66 4.52l2.83 2.83-2.83 2.83-2.830-2.830 2.830-2.830M9 5v4H5V5h4m10 10v4h-4v-4h4M9 15v4H5v-4h4m7.660-13.310L11 7.340 16.660 13l5.660-5.660-5.660-5.650zM11 3H3v8h8V3zm10 10h-8v8h8v-8zm-10 0H3v8h8v-8z"/></svg>
<div class="t" style="left:837.90px;top:85.80px;height:20.00px;line-height:20.00px;font-size:12.60px;color:#a9aaad;letter-spacing:-0.072px;">Versionen</div>
<svg class="ic" style="left:917.35px;top:83.85px;width:22.30px;height:22.30px" viewBox="0 0 24 24"><path fill="#fff" d="M19 3h-1V1h-2v2H8V1H6v2H5c-1.110 0-2 .9-2 2v14c0 1.100.89 2 2 2h14c1.100 0 2-.9 2-2V5c0-1.100-.9-2-2-2zm0 16H5V9h14v10zM5 7V5h14v2H5zm5.560 10.460l5.930-5.930-1.060-1.060-4.870 4.870-2.110-2.110-1.060 1.060z"/></svg>
<svg class="ic" style="left:962.85px;top:84.35px;width:22.30px;height:22.30px" viewBox="0 0 24 24"><path fill="#fff" d="M17 3H7c-1.100 0-1.990.9-1.990 2L5 21l7-3 7 3V5c0-1.100-.9-2-2-2zm0 15l-5-2.180L7 18V5h10v13z"/></svg>
<svg class="ic" style="left:1008.25px;top:83.85px;width:22.30px;height:22.30px" viewBox="0 0 24 24"><path fill="#fff" d="M11 15h6v2h-6zm0-4h6v2h-6zm0-4h6v2h-6zM7 7h2v2H7zm0 4h2v2H7zm0 4h2v2H7zm12-12h-4.180C14.400 1.840 13.300 1 12 1c-1.300 0-2.400.84-2.820 2H5c-1.100 0-2 .9-2 2v14c0 1.100.9 2 2 2h14c1.100 0 2-.9 2-2V5c0-1.100-.9-2-2-2zm-7-.250c.41 0 .75.340.75.750s-.34.750-.75.750-.75-.340-.750-.750.340-.750.750-.750zM19 19H5V5h14v14z"/></svg>
<svg class="ic" style="left:1053.85px;top:84.35px;width:22.30px;height:22.30px" viewBox="0 0 24 24"><path fill="#fff" d="M21.41 11.58l-9-9C12.050 2.220 11.550 2 11 2H4c-1.100 0-2 .9-2 2v7c0 .55.220 1.050.590 1.420l9 9c.36.360.86.580 1.410.580.550 0 1.050-.220 1.410-.590l7-7c.37-.36.590-.86.590-1.410 0-.55-.230-1.060-.590-1.420zM13 20.010L4 11V4h7v-.010l9 9-7 7.020zM6.500 5a1.500 1.500 0 1 0 0 3 1.500 1.500 0 1 0 0-3z"/></svg>
<svg class="ic" style="left:1099.35px;top:84.85px;width:22.30px;height:22.30px" viewBox="0 0 24 24"><path fill="#fff" d="M15.5 14h-.79l-.28-.27C15.41 12.59 16 11.11 16 9.5 16 5.91 13.09 3 9.5 3S3 5.91 3 9.5 5.91 16 9.5 16c1.61 0 3.09-.59 4.23-1.57l.27.28v.79l5 4.99L20.49 19l-4.99-5zm-6 0C7.01 14 5 11.99 5 9.5S7.01 5 9.5 5 14 7.01 14 9.5 11.99 14 9.5 14z"/></svg>
<div class="t" style="left:1127.50px;top:85.80px;height:20.00px;line-height:20.00px;font-size:12.60px;color:#a9aaad;letter-spacing:-0.010px;">Unterelemente Tabelle</div>
<div style="left:436.00px;top:112.00px;width:1002.30px;height:698.00px;background:#f5f5f5;"></div>
<div style="left:436.00px;top:112.30px;width:1002.30px;height:1.50px;background:#fdfdfd;"></div>
<div style="left:1438.30px;top:0.00px;width:1.70px;height:810.00px;background:#e9eaeb;"></div>
<div style="left:445.50px;top:124.00px;width:983.50px;height:35.00px;background:#d0d0d0;"></div>
<div style="left:445.50px;top:159.00px;width:1.00px;height:645.00px;background:#dedede;"></div>
<div style="left:1428.50px;top:159.00px;width:1.00px;height:645.00px;background:#dedede;"></div>
<div style="left:452.70px;top:131.00px;width:129.00px;height:28.00px;background:#f5f5f5;"></div>
<div class="t" style="left:462.00px;top:135.70px;height:20.00px;line-height:20.00px;font-size:12.00px;color:#3f3f3f;letter-spacing:0.324px;">Info &amp; Arbeitsablauf</div>
<div class="t" style="left:596.40px;top:135.70px;height:20.00px;line-height:20.00px;font-size:12.00px;color:#3f3f3f;letter-spacing:0.316px;">Basisinformationen</div>
<div class="t" style="left:727.70px;top:135.70px;height:20.00px;line-height:20.00px;font-size:12.00px;color:#3f3f3f;letter-spacing:0.209px;">Übersetzungen</div>
<div class="t" style="left:835.30px;top:135.70px;height:20.00px;line-height:20.00px;font-size:12.00px;color:#3f3f3f;letter-spacing:0.299px;">Textbausteine</div>
<div class="t" style="left:936.40px;top:135.70px;height:20.00px;line-height:20.00px;font-size:12.00px;color:#3f3f3f;letter-spacing:0.585px;">Attribut</div>
<div class="t" style="left:1001.70px;top:135.70px;height:20.00px;line-height:20.00px;font-size:12.00px;color:#3f3f3f;letter-spacing:0.330px;">Vermögenswerte</div>
<div class="t" style="left:1119.60px;top:135.70px;height:20.00px;line-height:20.00px;font-size:12.00px;color:#3f3f3f;letter-spacing:0.182px;">Relationen</div>
<div class="t" style="left:1201.70px;top:135.70px;height:20.00px;line-height:20.00px;font-size:12.00px;color:#3f3f3f;letter-spacing:0.175px;">Sicherheitshinweise</div>
<div class="t" style="left:1335.00px;top:135.70px;height:20.00px;line-height:20.00px;font-size:12.00px;color:#3f3f3f;letter-spacing:0.278px;">Praktikant</div>
<div style="left:464.50px;top:180.30px;width:729.30px;height:35.00px;background:#d0d0d0;"></div>
<div style="left:464.50px;top:215.00px;width:1.00px;height:581.00px;background:#dedede;"></div>
<div style="left:1192.80px;top:215.00px;width:1.00px;height:581.00px;background:#dedede;"></div>
<div style="left:471.80px;top:187.50px;width:71.20px;height:28.00px;background:#f5f5f5;"></div>
<div class="t" style="left:481.10px;top:191.70px;height:20.00px;line-height:20.00px;font-size:12.00px;color:#3f3f3f;letter-spacing:0.249px;">Übersicht</div>
<div class="t" style="left:557.50px;top:191.70px;height:20.00px;line-height:20.00px;font-size:12.00px;color:#3f3f3f;letter-spacing:0.284px;">Arbeitsablauf</div>
<div style="left:483.00px;top:236.20px;width:338.00px;height:528.50px;background:#f5f5f5;border:1px solid #dcdcdc;"></div>
<div style="left:483.80px;top:236.70px;width:336.20px;height:21.90px;background:#fff;"></div>
<div class="t" style="left:487.20px;top:237.65px;height:20.00px;line-height:20.00px;font-size:10.90px;color:#686868;transform:scaleX(0.860);transform-origin:0 50%;">EKB</div>
<div class="t" style="left:615.20px;top:237.65px;height:20.00px;line-height:20.00px;font-size:10.90px;color:#686868;">1</div>
<div style="left:483.80px;top:258.60px;width:336.20px;height:21.90px;background:#efefef;"></div>
<div class="t" style="left:487.20px;top:259.55px;height:20.00px;line-height:20.00px;font-size:10.90px;color:#686868;letter-spacing:0.197px;">Produkttitel</div>
<div class="t" style="left:615.20px;top:259.55px;height:20.00px;line-height:20.00px;font-size:10.90px;color:#686868;letter-spacing:-0.089px;">T-Shirt</div>
<div style="left:483.80px;top:280.50px;width:336.20px;height:21.90px;background:#fff;"></div>
<div class="t" style="left:487.20px;top:281.45px;height:20.00px;line-height:20.00px;font-size:10.90px;color:#686868;letter-spacing:0.017px;">Erfassungsdatum</div>
<div class="t" style="left:615.20px;top:281.45px;height:20.00px;line-height:20.00px;font-size:10.90px;color:#686868;letter-spacing:0.017px;">03.03.2023 15:17:20</div>
<div style="left:483.80px;top:302.40px;width:336.20px;height:21.90px;background:#efefef;"></div>
<div class="t" style="left:487.20px;top:303.35px;height:20.00px;line-height:20.00px;font-size:10.90px;color:#686868;letter-spacing:-0.279px;">Abgabe KW</div>
<div class="t" style="left:615.20px;top:303.35px;height:20.00px;line-height:20.00px;font-size:10.90px;color:#686868;letter-spacing:-0.178px;">2023_37</div>
<div style="left:483.80px;top:324.30px;width:336.20px;height:21.90px;background:#fff;"></div>
<div class="t" style="left:487.20px;top:325.25px;height:20.00px;line-height:20.00px;font-size:10.90px;color:#686868;transform:scaleX(0.892);transform-origin:0 50%;">WGR</div>
<div class="t" style="left:615.20px;top:325.25px;height:20.00px;line-height:20.00px;font-size:10.90px;color:#686868;letter-spacing:0.031px;">415</div>
<div style="left:610.20px;top:236.70px;width:1.00px;height:109.50px;background:#e2e2e2;"></div>
<div style="left:483.80px;top:346.20px;width:336.20px;height:18.00px;background:#d0d0d0;"></div>
<div class="t" style="left:488.50px;top:345.30px;height:20.00px;line-height:20.00px;font-size:11.00px;color:#222;font-weight:700;letter-spacing:0.476px;">Produkt/Artikelnummer</div>
<div class="t" style="left:716.50px;top:345.30px;height:20.00px;line-height:20.00px;font-size:11.00px;color:#222;font-weight:700;letter-spacing:0.159px;">Status</div>
<div style="left:483.50px;top:364.25px;width:323.70px;height:21.90px;background:#fff;"></div>
<div class="t" style="left:487.20px;top:365.40px;height:20.00px;line-height:20.00px;font-size:10.90px;color:#686868;letter-spacing:-0.052px;">S1073010 T-Shirt</div>
<div style="left:715.50px;top:364.25px;width:36.30px;height:21.90px;background:rgba(255,255,255,0.550);"></div>
<div style="left:723.50px;top:365.55px;width:20.50px;height:19.50px;background:#222;"></div>
<div style="left:728.250px;top:369.80px;width:11px;height:11px;border-radius:50%;background:#2ea152;"></div>
<div class="t" style="left:764.60px;top:365.40px;height:20.00px;line-height:20.00px;font-size:10.90px;color:#686868;letter-spacing:0.164px;"><u>Öffnen</u></div>
<div style="left:483.50px;top:386.15px;width:323.70px;height:21.90px;background:#efefef;"></div>
<div class="t" style="left:501.80px;top:387.30px;height:20.00px;line-height:20.00px;font-size:10.90px;color:#686868;letter-spacing:0.145px;">107301013800 dunkelblau/weiß</div>
<div style="left:715.50px;top:386.15px;width:36.30px;height:21.90px;background:rgba(255,255,255,0.550);"></div>
<div style="left:723.50px;top:387.45px;width:20.50px;height:19.50px;background:#222;"></div>
<div style="left:728.250px;top:391.70px;width:11px;height:11px;border-radius:50%;background:#2ea152;"></div>
<div class="t" style="left:760.00px;top:387.30px;height:20.00px;line-height:20.00px;font-size:10.90px;color:#686868;letter-spacing:0.068px;">Geöffnet</div>
<div style="left:483.50px;top:408.05px;width:323.70px;height:21.90px;background:#fff;"></div>
<div class="t" style="left:520.30px;top:409.20px;height:20.00px;line-height:20.00px;font-size:10.90px;color:#686868;letter-spacing:0.119px;">1073010009 34</div>
<div style="left:715.50px;top:408.05px;width:36.30px;height:21.90px;background:rgba(255,255,255,0.550);"></div>
<div style="left:723.50px;top:409.35px;width:20.50px;height:19.50px;background:#222;"></div>
<div style="left:728.250px;top:413.60px;width:11px;height:11px;border-radius:50%;background:#2ea152;"></div>
<div class="t" style="left:764.60px;top:409.20px;height:20.00px;line-height:20.00px;font-size:10.90px;color:#686868;letter-spacing:0.164px;"><u>Öffnen</u></div>
<div style="left:483.50px;top:429.95px;width:323.70px;height:21.90px;background:#efefef;"></div>
<div class="t" style="left:520.30px;top:431.10px;height:20.00px;line-height:20.00px;font-size:10.90px;color:#686868;letter-spacing:0.119px;">1073010010 36</div>
<div style="left:715.50px;top:429.95px;width:36.30px;height:21.90px;background:rgba(255,255,255,0.550);"></div>
<div style="left:723.50px;top:431.25px;width:20.50px;height:19.50px;background:#222;"></div>
<div style="left:728.250px;top:435.50px;width:11px;height:11px;border-radius:50%;background:#2ea152;"></div>
<div class="t" style="left:764.60px;top:431.10px;height:20.00px;line-height:20.00px;font-size:10.90px;color:#686868;letter-spacing:0.164px;"><u>Öffnen</u></div>
<div style="left:483.50px;top:451.85px;width:323.70px;height:21.90px;background:#fff;"></div>
<div class="t" style="left:520.30px;top:453.00px;height:20.00px;line-height:20.00px;font-size:10.90px;color:#686868;letter-spacing:0.184px;">1073010011 38</div>
<div style="left:715.50px;top:451.85px;width:36.30px;height:21.90px;background:rgba(255,255,255,0.550);"></div>
<div style="left:723.50px;top:453.15px;width:20.50px;height:19.50px;background:#222;"></div>
<div style="left:728.250px;top:457.40px;width:11px;height:11px;border-radius:50%;background:#2ea152;"></div>
<div class="t" style="left:764.60px;top:453.00px;height:20.00px;line-height:20.00px;font-size:10.90px;color:#686868;letter-spacing:0.164px;"><u>Öffnen</u></div>
<div style="left:483.50px;top:473.75px;width:323.70px;height:21.90px;background:#efefef;"></div>
<div class="t" style="left:520.30px;top:474.90px;height:20.00px;line-height:20.00px;font-size:10.90px;color:#686868;letter-spacing:0.119px;">1073010012 40</div>
<div style="left:715.50px;top:473.75px;width:36.30px;height:21.90px;background:rgba(255,255,255,0.550);"></div>
<div style="left:723.50px;top:475.05px;width:20.50px;height:19.50px;background:#222;"></div>
<div style="left:728.250px;top:479.30px;width:11px;height:11px;border-radius:50%;background:#2ea152;"></div>
<div class="t" style="left:764.60px;top:474.90px;height:20.00px;line-height:20.00px;font-size:10.90px;color:#686868;letter-spacing:0.164px;"><u>Öffnen</u></div>
<div style="left:483.50px;top:495.65px;width:323.70px;height:21.90px;background:#fff;"></div>
<div class="t" style="left:520.30px;top:496.80px;height:20.00px;line-height:20.00px;font-size:10.90px;color:#686868;letter-spacing:0.119px;">1073010013 42</div>
<div style="left:715.50px;top:495.65px;width:36.30px;height:21.90px;background:rgba(255,255,255,0.550);"></div>
<div style="left:723.50px;top:496.95px;width:20.50px;height:19.50px;background:#222;"></div>
<div style="left:728.250px;top:501.20px;width:11px;height:11px;border-radius:50%;background:#2ea152;"></div>
<div class="t" style="left:764.60px;top:496.80px;height:20.00px;line-height:20.00px;font-size:10.90px;color:#686868;letter-spacing:0.164px;"><u>Öffnen</u></div>
<div style="left:483.50px;top:517.55px;width:323.70px;height:21.90px;background:#efefef;"></div>
<div class="t" style="left:520.30px;top:518.70px;height:20.00px;line-height:20.00px;font-size:10.90px;color:#686868;letter-spacing:0.119px;">1073010014 44</div>
<div style="left:715.50px;top:517.55px;width:36.30px;height:21.90px;background:rgba(255,255,255,0.550);"></div>
<div style="left:723.50px;top:518.85px;width:20.50px;height:19.50px;background:#222;"></div>
<div style="left:728.250px;top:523.10px;width:11px;height:11px;border-radius:50%;background:#2ea152;"></div>
<div class="t" style="left:764.60px;top:518.70px;height:20.00px;line-height:20.00px;font-size:10.90px;color:#686868;letter-spacing:0.164px;"><u>Öffnen</u></div>
<div style="left:483.50px;top:539.45px;width:323.70px;height:21.90px;background:#fff;"></div>
<div class="t" style="left:520.30px;top:540.60px;height:20.00px;line-height:20.00px;font-size:10.90px;color:#686868;letter-spacing:0.119px;">1073010015 46</div>
<div style="left:715.50px;top:539.45px;width:36.30px;height:21.90px;background:rgba(255,255,255,0.550);"></div>
<div style="left:723.50px;top:540.75px;width:20.50px;height:19.50px;background:#222;"></div>
<div style="left:728.250px;top:545.00px;width:11px;height:11px;border-radius:50%;background:#2ea152;"></div>
<div class="t" style="left:764.60px;top:540.60px;height:20.00px;line-height:20.00px;font-size:10.90px;color:#686868;letter-spacing:0.164px;"><u>Öffnen</u></div>
<div style="left:483.50px;top:561.35px;width:323.70px;height:21.90px;background:#efefef;"></div>
<div class="t" style="left:520.30px;top:562.50px;height:20.00px;line-height:20.00px;font-size:10.90px;color:#686868;letter-spacing:0.119px;">1073010016 48</div>
<div style="left:715.50px;top:561.35px;width:36.30px;height:21.90px;background:rgba(255,255,255,0.550);"></div>
<div style="left:723.50px;top:562.65px;width:20.50px;height:19.50px;background:#222;"></div>
<div style="left:728.250px;top:566.90px;width:11px;height:11px;border-radius:50%;background:#2ea152;"></div>
<div class="t" style="left:764.60px;top:562.50px;height:20.00px;line-height:20.00px;font-size:10.90px;color:#686868;letter-spacing:0.164px;"><u>Öffnen</u></div>
<div style="left:715.00px;top:364.25px;width:1.00px;height:219.00px;background:#e2e2e2;"></div>
<div style="left:751.80px;top:364.25px;width:1.00px;height:219.00px;background:#e2e2e2;"></div>
<div style="left:837.00px;top:236.20px;width:337.00px;height:251.50px;background:#fff;border:1px solid #dcdcdc;"></div>
<div style="left:837.50px;top:419.70px;width:336.00px;height:1.00px;background:#dcdcdc;"></div>
<svg class="ab" style="left:933.90px;top:241.25px;width:144.50px;height:173.25px" viewBox="0 0 144.500 173.250" preserveAspectRatio="none">
<defs><linearGradient id="pbga" x1="0" y1="0" x2="0" y2="1"><stop offset="0" stop-color="#dddeda"/><stop offset="0.6" stop-color="#e0e1dc"/><stop offset="0.74" stop-color="#dadbd5"/><stop offset="1" stop-color="#dfe0da"/></linearGradient><radialGradient id="pgla" cx="0.5" cy="0.4" r="0.6"><stop offset="0" stop-color="#e9eae6" stop-opacity="0.9"/><stop offset="1" stop-color="#e9eae6" stop-opacity="0"/></radialGradient><filter id="pbla" x="-5%" y="-5%" width="110%" height="110%"><feGaussianBlur stdDeviation="0.5"/></filter></defs>
<rect width="144.500" height="173.250" fill="url(#pbga)"/><rect width="144.500" height="173.250" fill="url(#pgla)"/>
<g filter="url(#pbla)">
<path d="M41 0L50 0 49 30 46 60 44.500 70 41.500 68 39.800 56 39.600 40 40.500 20z" fill="#c9a58e"/>
<path d="M92 0L101 0 100 20 100.800 40 100.500 56 99.500 66 97 70 96 60 94 30z" fill="#c9a58e"/>
<path d="M53.400 116h13.600l-1 18-1 16h-8l-2.200-16z" fill="#c6a28c"/>
<path d="M75 116h15.500l-2.500 18-3 16h-7.800l-1-16z" fill="#c6a28c"/>
<path d="M54.300 0h36.200v8.500c-10 2-26 2-36.200 0z" fill="#f6f6f6"/>
<path d="M51.700 7c11 2.500 29 2.500 40.400 0L97.200 41l1.100 22-2.200 22-2.200 33.700H49.400L46.800 85 42.800 63l1.100-22z" fill="#161616"/>
<path d="M53.500 151c3-3 10-3 14 0l2 9c.5 5-2 8-8 8s-9-2.500-9-8z" fill="#e4e1d2"/>
<path d="M74.500 151c3.500-3 10-3 13 0l2.500 9c.5 5.500-2.500 8-8 8s-8.500-3-8-8z" fill="#e4e1d2"/>
<path d="M52.700 162.500h16.800v4.500c-3 1.800-14 1.800-16.800 0zM73.800 162.500h16.200v4.500c-3 1.800-13.500 1.800-16.200 0z" fill="#f6f5f0"/>
<path d="M56.500 148h9.500l.8 5.500-11 .5zM77.300 148h9l1 6-10.800-.5z" fill="#26262b"/>
<path d="M55 154.500l11-1 2 7-13.500.5zM76 153.500l10.500 1 2 6-13-.5z" fill="#a7a492"/>
</g></svg>
<svg class="ab" style="left:842.00px;top:422.80px;width:35.20px;height:41.50px" viewBox="0 0 144.500 173.250" preserveAspectRatio="none">
<defs><linearGradient id="pbgb" x1="0" y1="0" x2="0" y2="1"><stop offset="0" stop-color="#dddeda"/><stop offset="0.6" stop-color="#e0e1dc"/><stop offset="0.74" stop-color="#dadbd5"/><stop offset="1" stop-color="#dfe0da"/></linearGradient><radialGradient id="pglb" cx="0.5" cy="0.4" r="0.6"><stop offset="0" stop-color="#e9eae6" stop-opacity="0.9"/><stop offset="1" stop-color="#e9eae6" stop-opacity="0"/></radialGradient><filter id="pblb" x="-5%" y="-5%" width="110%" height="110%"><feGaussianBlur stdDeviation="0.5"/></filter></defs>
<rect width="144.500" height="173.250" fill="url(#pbgb)"/><rect width="144.500" height="173.250" fill="url(#pglb)"/>
<g filter="url(#pblb)">
<path d="M41 0L50 0 49 30 46 60 44.500 70 41.500 68 39.800 56 39.600 40 40.500 20z" fill="#c9a58e"/>
<path d="M92 0L101 0 100 20 100.800 40 100.500 56 99.500 66 97 70 96 60 94 30z" fill="#c9a58e"/>
<path d="M53.400 116h13.600l-1 18-1 16h-8l-2.200-16z" fill="#c6a28c"/>
<path d="M75 116h15.500l-2.500 18-3 16h-7.800l-1-16z" fill="#c6a28c"/>
<path d="M54.300 0h36.200v8.500c-10 2-26 2-36.200 0z" fill="#f6f6f6"/>
<path d="M51.700 7c11 2.500 29 2.500 40.400 0L97.200 41l1.100 22-2.200 22-2.200 33.700H49.400L46.800 85 42.800 63l1.100-22z" fill="#161616"/>
<path d="M53.500 151c3-3 10-3 14 0l2 9c.5 5-2 8-8 8s-9-2.500-9-8z" fill="#e4e1d2"/>
<path d="M74.500 151c3.500-3 10-3 13 0l2.500 9c.5 5.500-2.500 8-8 8s-8.500-3-8-8z" fill="#e4e1d2"/>
<path d="M52.700 162.500h16.800v4.500c-3 1.800-14 1.800-16.800 0zM73.800 162.500h16.200v4.500c-3 1.800-13.500 1.800-16.200 0z" fill="#f6f5f0"/>
<path d="M56.500 148h9.500l.8 5.500-11 .5zM77.300 148h9l1 6-10.800-.5z" fill="#26262b"/>
<path d="M55 154.500l11-1 2 7-13.500.5zM76 153.500l10.500 1 2 6-13-.5z" fill="#a7a492"/>
</g></svg>
<div style="left:837.50px;top:466.30px;width:44.20px;height:2.00px;background:#d63a45;"></div>
<div style="left:837.00px;top:504.30px;width:337.00px;height:260.40px;background:#fff;border:1px solid #dcdcdc;border-top:0;"></div>
<div style="left:837.50px;top:504.30px;width:336.00px;height:18.40px;background:#d0d0d0;"></div>
<div class="t" style="left:843.30px;top:503.60px;height:20.00px;line-height:20.00px;font-size:11.00px;color:#222;font-weight:700;letter-spacing:0.102px;">Step</div>
<div class="t" style="left:941.80px;top:503.60px;height:20.00px;line-height:20.00px;font-size:11.00px;color:#222;font-weight:700;letter-spacing:0.142px;">Details</div>
<div class="t" style="left:1052.50px;top:503.60px;height:20.00px;line-height:20.00px;font-size:11.00px;color:#222;font-weight:700;letter-spacing:0.177px;">Status</div>
<div class="t" style="left:1095.70px;top:503.60px;height:20.00px;line-height:20.00px;font-size:11.00px;color:#222;font-weight:700;letter-spacing:0.229px;">Gesamtstatus</div>
<div style="left:837.50px;top:522.70px;width:250.50px;height:21.94px;background:#fff;"></div>
<div class="t" style="left:841.50px;top:523.97px;height:20.00px;line-height:20.00px;font-size:10.90px;color:#686868;">1a</div>
<div class="t" style="left:873.40px;top:523.97px;height:20.00px;line-height:20.00px;font-size:10.90px;color:#686868;letter-spacing:0.076px;">Neues Produkt</div>
<div class="t" style="left:1049.20px;top:524.87px;height:20.00px;line-height:20.00px;font-size:12.00px;color:#15801a;font-weight:700;width:40.50px;text-align:center;font-family:'DejaVu Sans',sans-serif;">✓</div>
<div style="left:837.50px;top:544.64px;width:250.50px;height:21.94px;background:#efefef;"></div>
<div class="t" style="left:841.50px;top:545.91px;height:20.00px;line-height:20.00px;font-size:10.90px;color:#686868;">1b</div>
<div class="t" style="left:873.40px;top:545.91px;height:20.00px;line-height:20.00px;font-size:10.90px;color:#686868;letter-spacing:0.147px;">Vorprüfung Nachfolger</div>
<div class="t" style="left:1049.20px;top:546.81px;height:20.00px;line-height:20.00px;font-size:12.00px;color:#15801a;font-weight:700;width:40.50px;text-align:center;font-family:'DejaVu Sans',sans-serif;">✓</div>
<div style="left:837.50px;top:566.58px;width:250.50px;height:21.94px;background:#fff;"></div>
<div class="t" style="left:841.50px;top:567.85px;height:20.00px;line-height:20.00px;font-size:10.90px;color:#686868;">2a</div>
<div class="t" style="left:873.40px;top:567.85px;height:20.00px;line-height:20.00px;font-size:10.90px;color:#686868;letter-spacing:0.158px;">Muster versendet / bereitgestellt</div>
<div class="t" style="left:1049.20px;top:568.75px;height:20.00px;line-height:20.00px;font-size:12.00px;color:#15801a;font-weight:700;width:40.50px;text-align:center;font-family:'DejaVu Sans',sans-serif;">✓</div>
<div style="left:837.50px;top:588.52px;width:250.50px;height:21.94px;background:#efefef;"></div>
<div class="t" style="left:841.50px;top:589.79px;height:20.00px;line-height:20.00px;font-size:10.90px;color:#686868;">2b</div>
<div class="t" style="left:873.40px;top:589.79px;height:20.00px;line-height:20.00px;font-size:10.90px;color:#686868;letter-spacing:0.132px;">Mustereingang</div>
<div class="t" style="left:1049.20px;top:590.69px;height:20.00px;line-height:20.00px;font-size:12.00px;color:#15801a;font-weight:700;width:40.50px;text-align:center;font-family:'DejaVu Sans',sans-serif;">✓</div>
<div style="left:837.50px;top:610.46px;width:250.50px;height:21.94px;background:#fff;"></div>
<div class="t" style="left:841.50px;top:611.73px;height:20.00px;line-height:20.00px;font-size:10.90px;color:#686868;">3a</div>
<div class="t" style="left:873.40px;top:611.73px;height:20.00px;line-height:20.00px;font-size:10.90px;color:#686868;letter-spacing:0.164px;">Photo Produktion</div>
<div class="t" style="left:1049.20px;top:612.63px;height:20.00px;line-height:20.00px;font-size:12.00px;color:#15801a;font-weight:700;width:40.50px;text-align:center;font-family:'DejaVu Sans',sans-serif;">✓</div>
<div style="left:837.50px;top:632.40px;width:250.50px;height:21.94px;background:#efefef;"></div>
<div class="t" style="left:841.50px;top:633.67px;height:20.00px;line-height:20.00px;font-size:10.90px;color:#686868;">3b</div>
<div class="t" style="left:873.40px;top:633.67px;height:20.00px;line-height:20.00px;font-size:10.90px;color:#686868;letter-spacing:0.133px;">Automatische Bild-Zuordnung</div>
<div class="t" style="left:1049.20px;top:634.57px;height:20.00px;line-height:20.00px;font-size:12.00px;color:#15801a;font-weight:700;width:40.50px;text-align:center;font-family:'DejaVu Sans',sans-serif;">✓</div>
<div style="left:837.50px;top:654.34px;width:250.50px;height:21.94px;background:#fff;"></div>
<div class="t" style="left:841.50px;top:655.61px;height:20.00px;line-height:20.00px;font-size:10.90px;color:#686868;">4</div>
<div class="t" style="left:873.40px;top:655.61px;height:20.00px;line-height:20.00px;font-size:10.90px;color:#686868;letter-spacing:0.180px;">Bilder prüfen</div>
<div class="t" style="left:1049.20px;top:656.51px;height:20.00px;line-height:20.00px;font-size:12.00px;color:#15801a;font-weight:700;width:40.50px;text-align:center;font-family:'DejaVu Sans',sans-serif;">✓</div>
<div style="left:837.50px;top:676.28px;width:250.50px;height:21.94px;background:#efefef;"></div>
<div class="t" style="left:841.50px;top:677.55px;height:20.00px;line-height:20.00px;font-size:10.90px;color:#686868;">5</div>
<div class="t" style="left:873.40px;top:677.55px;height:20.00px;line-height:20.00px;font-size:10.90px;color:#686868;letter-spacing:0.111px;">Attribute und Texte DE pflegen</div>
<div class="t" style="left:1049.20px;top:678.45px;height:20.00px;line-height:20.00px;font-size:12.00px;color:#15801a;font-weight:700;width:40.50px;text-align:center;font-family:'DejaVu Sans',sans-serif;">✓</div>
<div style="left:837.50px;top:698.22px;width:250.50px;height:21.94px;background:#fff;"></div>
<div class="t" style="left:841.50px;top:699.49px;height:20.00px;line-height:20.00px;font-size:10.90px;color:#686868;">6</div>
<div class="t" style="left:873.40px;top:699.49px;height:20.00px;line-height:20.00px;font-size:10.90px;color:#686868;letter-spacing:0.211px;">QA Attribute und Texte</div>
<div class="t" style="left:1049.20px;top:700.39px;height:20.00px;line-height:20.00px;font-size:12.00px;color:#15801a;font-weight:700;width:40.50px;text-align:center;font-family:'DejaVu Sans',sans-serif;">✓</div>
<div style="left:837.50px;top:720.16px;width:250.50px;height:21.94px;background:#efefef;"></div>
<div class="t" style="left:841.50px;top:721.43px;height:20.00px;line-height:20.00px;font-size:10.90px;color:#686868;">7</div>
<div class="t" style="left:873.40px;top:721.43px;height:20.00px;line-height:20.00px;font-size:10.90px;color:#686868;letter-spacing:0.102px;">Übersetzung Texte</div>
<div class="t" style="left:1049.20px;top:722.33px;height:20.00px;line-height:20.00px;font-size:12.00px;color:#15801a;font-weight:700;width:40.50px;text-align:center;font-family:'DejaVu Sans',sans-serif;">✓</div>
<div style="left:837.50px;top:742.10px;width:250.50px;height:21.94px;background:#fff;"></div>
<div class="t" style="left:841.50px;top:743.37px;height:20.00px;line-height:20.00px;font-size:10.90px;color:#686868;">8</div>
<div class="t" style="left:873.40px;top:743.37px;height:20.00px;line-height:20.00px;font-size:10.90px;color:#686868;letter-spacing:-0.068px;">QA Text in Sprache X</div>
<div class="t" style="left:1049.20px;top:744.27px;height:20.00px;line-height:20.00px;font-size:12.00px;color:#15801a;font-weight:700;width:40.50px;text-align:center;font-family:'DejaVu Sans',sans-serif;">✓</div>
<div style="left:869.10px;top:522.70px;width:1.00px;height:241.34px;background:#e2e2e2;"></div>
<div style="left:1046.80px;top:522.70px;width:1.00px;height:241.34px;background:#e2e2e2;"></div>
<div style="left:1087.50px;top:522.70px;width:1.00px;height:241.34px;background:#e2e2e2;"></div>
<svg class="ab" style="left:1106px;top:541px;width:54px;height:205px" viewBox="0 0 54 205"><g fill="#222"><rect x="1.800" y="1.70" width="50.500" height="50.90" rx="3"/><rect x="1.800" y="51.85" width="50.500" height="50.90" rx="3"/><rect x="1.800" y="102.00" width="50.500" height="50.90" rx="3"/><rect x="1.800" y="152.15" width="50.500" height="50.15" rx="3"/></g><circle cx="26.400" cy="26.60" r="18.300" fill="#3d3d42"/><circle cx="26.400" cy="76.73" r="18.300" fill="#3d3d42"/><circle cx="26.400" cy="126.86" r="18.300" fill="#3d3d42"/><circle cx="26.400" cy="176.99" r="18.300" fill="#2ea152"/></svg>
<div style="left:483.00px;top:774.50px;width:691.00px;height:40.00px;background:#f5f5f5;border:1px solid #dcdcdc;"></div>
<div style="left:483px;top:774.500px;width:691px;height:21.800px;overflow:hidden;"><div class="t" style="left:76px;top:6.300px;font-size:12px;line-height:20px;font-weight:700;color:#e8151b;letter-spacing:0.184px;">Bitte beachten Sie, dass sich der Status erst nach einem Neuladen des Objektes aktualisiert!</div></div>
<div style="left:436.00px;top:796.30px;width:1002.30px;height:13.70px;background:#f5f5f5;"></div>
<div style="left:445.50px;top:796.30px;width:1.00px;height:7.50px;background:#dedede;"></div>
<div style="left:1428.50px;top:796.30px;width:1.00px;height:7.50px;background:#dedede;"></div>
</div></body></html>
